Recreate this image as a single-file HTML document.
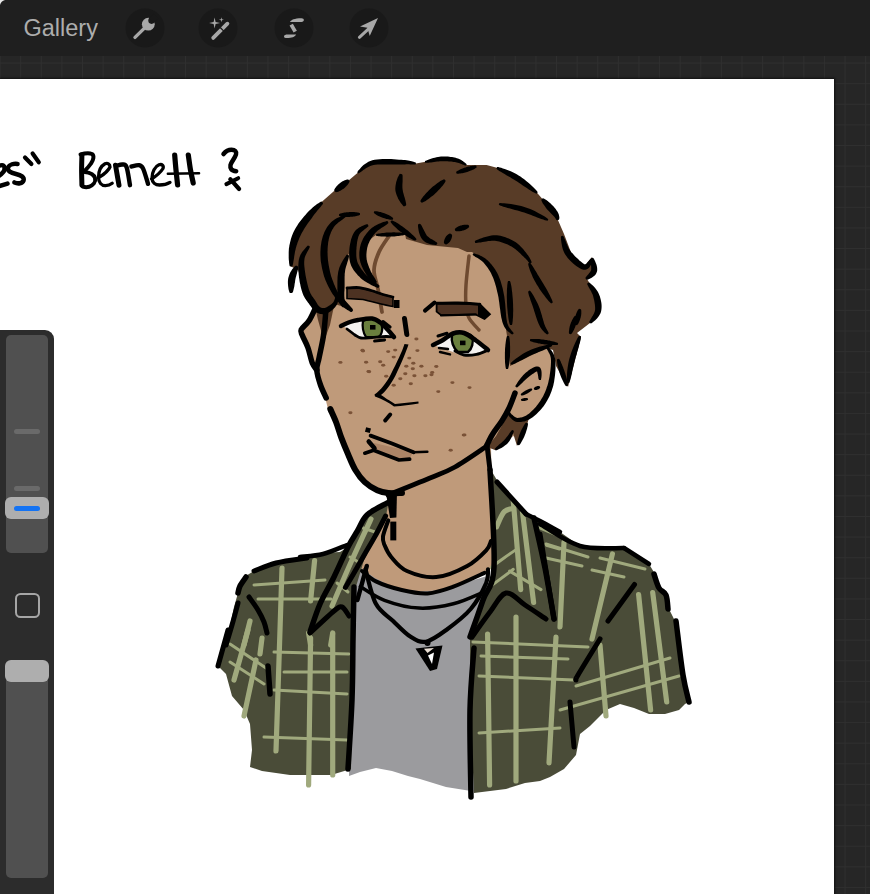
<!DOCTYPE html>
<html><head><meta charset="utf-8">
<style>
html,body{margin:0;padding:0;width:870px;height:894px;overflow:hidden;background:#262626;font-family:"Liberation Sans",sans-serif;}
#grid{position:absolute;left:0;top:0;width:870px;height:894px;
 background-color:#262626;
 background-image:linear-gradient(to right,#2f2f2f 1px,transparent 1px),linear-gradient(to bottom,#2f2f2f 1px,transparent 1px);
 background-size:20.62px 20.62px;background-position:20.2px 0.75px;}
#top{position:absolute;left:0;top:0;width:870px;height:56px;background:#1f1f1f;}
#gallery{position:absolute;left:23.5px;top:15px;font-size:23.5px;color:#adadad;letter-spacing:0px;}
#top svg{position:absolute;left:0;top:0;}
.ic{position:absolute;top:8px;width:40px;height:40px;border-radius:50%;background:#191919;}
#canvas{position:absolute;left:0;top:79px;width:834px;height:815px;background:#fff;box-shadow:0 0 2px 1px #111;}
#side{position:absolute;left:0;top:330px;width:54px;height:564px;background:#2c2c2c;border-radius:0 9px 0 0;}
.track{position:absolute;left:6px;width:42px;background:#505050;border-radius:5px;}
.tick{position:absolute;left:14px;width:26px;height:5px;border-radius:3px;background:#6a6a6a;}
.handle{position:absolute;left:5px;width:44px;height:22px;border-radius:6px;background:#aeaeae;}
svg{position:absolute;left:0;top:0;}
</style></head><body>
<div id="grid"></div>
<div id="top">
 <svg width="8" height="8" style="position:absolute;left:0;top:0"><path d="M0 0 L5 0 Q1 1 0 5 Z" fill="#e8e8e8"/></svg>
 <div id="gallery">Gallery</div>
 <svg width="870" height="56" viewBox="0 0 870 56">
  <g fill="#191919"><circle cx="145" cy="28" r="19.5"/><circle cx="218" cy="28" r="19.5"/><circle cx="294" cy="28" r="19.5"/><circle cx="369" cy="28" r="19.5"/></g>
  <g fill="#a8a8a8" stroke="#a8a8a8">
   <line x1="135" y1="37.4" x2="146" y2="26.6" stroke-width="3.4" stroke-linecap="round"/>
   <circle cx="148.3" cy="24.2" r="6.4" stroke="none"/>
   <circle cx="151.6" cy="20.6" r="3.3" fill="#191919" stroke="none"/>
   <polygon points="149.3,18.3 153.9,22.9 158.4,18.4 153.8,13.8" fill="#191919" stroke="none"/>
  </g>
  <g fill="#a8a8a8">
   <line x1="213.2" y1="37.9" x2="227.4" y2="23.7" stroke="#a8a8a8" stroke-width="3.8" stroke-linecap="round"/>
   <line x1="220.2" y1="27.5" x2="223.8" y2="31.1" stroke="#191919" stroke-width="1.3"/>
   <path d="M214.6 17.5 L215.6 21.9 L220.1 22.9 L215.6 23.9 L214.6 28.4 L213.6 23.9 L209.1 22.9 L213.6 21.9 Z"/>
   <path d="M221.4 17.2 L221.9 19.2 L223.9 19.7 L221.9 20.2 L221.4 22.2 L220.9 20.2 L218.9 19.7 L220.9 19.2 Z"/>
  </g>
  <g fill="#a8a8a8">
   <path d="M290 21.9 C291.5 19.5 294 18.4 301.5 18.2 C304.6 18.2 304.6 21.7 301.5 21.9 Z"/>
   <line x1="291.2" y1="24.6" x2="295.2" y2="31.6" stroke="#a8a8a8" stroke-width="3.8"/>
   <path d="M284 36.4 C284 35 285.5 34.6 288 34.6 L296.2 34.5 C295 36.9 291.5 38 287 38 C285 38 284 37.4 284 36.4 Z"/>
  </g>
  <g fill="#a8a8a8">
   <polygon points="378,17.9 360,26.4 367.4,27.8 369.7,36"/>
   <line x1="368" y1="29.4" x2="359.4" y2="37.3" stroke="#a8a8a8" stroke-width="3" stroke-linecap="round"/>
  </g>
 </svg>
</div>
<div id="canvas"></div>
<svg id="art" width="870" height="894" viewBox="0 0 870 894">
<polygon fill="#bf9a7a" points="318,262 303,285 310,299 316,307.4 309,320.8 301.2,329.7 302.3,335.3 307.9,347.6 312.4,363.3 316.8,370 321.3,385 325.5,399 328,409 336,422 341.4,437.9 348,454 355.2,469.7 364.8,482.1 377.2,490.3 388,493 389,496 387,503 385.6,516 375,536 364,555 358,566 362,571 375.9,581.4 401.7,590 427.6,593.4 453.4,586.6 487,571 493,568 491,446 505,440 523,432 530,416 543,401 551,382 553,359 545,345 535,345 520,300 480,236 380,226"/>
<polygon fill="#583c27" points="290,266 291.5,247.6 297.8,230.4 310.3,213.2 321.3,202.3 333.8,191.3 348.9,180.3 357.7,172.8 372.9,162.7 403.2,162.2 415.9,163.5 441.1,158.9 456.3,160.2 466.4,165 486.6,165 496.8,167.8 517,177.9 537.2,193 555,213.3 564,234 572,255 584,267 592,257 595,271 587,279 597,295 598,311 590,323 577,333 581,337 568,387 556,366 553,350 546,348 510,366 507,336 505,323 501,294 495,275 485,261 472,252 467,252 458,248 427,245 406,239 405,233.5 376,235 365,243 363,258 368,272 375,282 379,287 371,282 362,275 354,263 353,248 348,255 342,270 341,286 342,300 350,310 344,307 334.7,304 325.8,310.7 318,309.6 310.1,299.5 303.4,285 298,270"/>
<polygon fill="#5a3d28" points="316,311 334,306 330,325 324,341 318,320"/>
<polygon fill="#583c27" points="487,447 496,436 505,420 509,413 517,421 530,414 527,425 520,440 517,446 513,433 506,441 495,450"/>
<polygon fill="#9b9b9e" points="345,588 358,566 375,578 394,587.4 420,591.4 441,590 487,576 480,640 472,700 471,791 446,787 420,779 408,776 392,771 376,768 360,772 349,776 352,660"/>
<polygon fill="#4a4c38" points="389,500 387,503 367,515 357,531 348,547 340,552 322,553 306,559 276,563 254,571 244,577 238,593 234,607 226,645 218,666 226,674 232,696 244,710 250,724 252,750 250,767 262,771 290,775 331,775 351,769 353,660 355,590 364,560 376,536 386,516"/>
<polygon fill="#4a4c38" points="491,470 498,482 526,514 538,520 560,532 580,546 624,548 649,564 655,574 659,588 667,595 669,609 675,621 681,650 689,702 685,704 679,710 665,714 649,714 634,708 620,704 606,710 590,726 580,734 576,755 564,769 550,777 540,781 525,783 506,789 474,793 470,710 470,637 483,600 494,567"/>
<path fill="none" stroke="#a0a97d" stroke-width="5.2" stroke-linecap="round" stroke-linejoin="round" d="M282.0 568.0 C281.7 578.3 281.0 599.5 280.0 630.0 C279.0 660.5 276.7 730.8 276.0 751.0"/>
<path fill="none" stroke="#a0a97d" stroke-width="5.2" stroke-linecap="round" stroke-linejoin="round" d="M314.6 560.5 L310.6 601.0"/>
<path fill="none" stroke="#a0a97d" stroke-width="3" stroke-linecap="round" stroke-linejoin="round" d="M254.0 585.0 L325.0 580.0"/>
<path fill="none" stroke="#a0a97d" stroke-width="3" stroke-linecap="round" stroke-linejoin="round" d="M258.0 599.0 L331.0 599.0"/>
<path fill="none" stroke="#a0a97d" stroke-width="5.2" stroke-linecap="round" stroke-linejoin="round" d="M250.0 621.0 L244.0 645.0"/>
<path fill="none" stroke="#a0a97d" stroke-width="5.2" stroke-linecap="round" stroke-linejoin="round" d="M308.6 633.0 L310.6 645.0"/>
<path fill="none" stroke="#a0a97d" stroke-width="5.2" stroke-linecap="round" stroke-linejoin="round" d="M332.7 633.0 L330.7 645.0"/>
<path fill="none" stroke="#a0a97d" stroke-width="5.2" stroke-linecap="round" stroke-linejoin="round" d="M248.0 630.0 L234.0 680.0"/>
<path fill="none" stroke="#a0a97d" stroke-width="5.2" stroke-linecap="round" stroke-linejoin="round" d="M256.0 660.0 L244.0 716.0"/>
<path fill="none" stroke="#a0a97d" stroke-width="5.2" stroke-linecap="round" stroke-linejoin="round" d="M310.6 638.0 L308.6 785.0"/>
<path fill="none" stroke="#a0a97d" stroke-width="5.2" stroke-linecap="round" stroke-linejoin="round" d="M332.7 634.0 L332.7 775.0"/>
<path fill="none" stroke="#a0a97d" stroke-width="3" stroke-linecap="round" stroke-linejoin="round" d="M274.0 652.0 L349.0 654.0"/>
<path fill="none" stroke="#a0a97d" stroke-width="3" stroke-linecap="round" stroke-linejoin="round" d="M284.0 672.0 L347.0 672.0"/>
<path fill="none" stroke="#a0a97d" stroke-width="3" stroke-linecap="round" stroke-linejoin="round" d="M274.0 690.0 L347.0 694.0"/>
<path fill="none" stroke="#a0a97d" stroke-width="3" stroke-linecap="round" stroke-linejoin="round" d="M264.0 737.0 L347.0 740.0"/>
<path fill="none" stroke="#a0a97d" stroke-width="3" stroke-linecap="round" stroke-linejoin="round" d="M230.0 644.0 L266.0 668.0"/>
<path fill="none" stroke="#a0a97d" stroke-width="3" stroke-linecap="round" stroke-linejoin="round" d="M230.0 662.0 L264.0 684.0"/>
<path fill="none" stroke="#a0a97d" stroke-width="5.2" stroke-linecap="round" stroke-linejoin="round" d="M262.0 638.0 L260.0 654.0"/>
<path fill="none" stroke="#a0a97d" stroke-width="5.2" stroke-linecap="round" stroke-linejoin="round" d="M371.0 519.0 C367.8 525.8 358.5 545.5 352.0 560.0 C345.5 574.5 335.3 598.3 332.0 606.0"/>
<path fill="none" stroke="#a0a97d" stroke-width="3" stroke-linecap="round" stroke-linejoin="round" d="M363.0 528.0 L375.0 532.0"/>
<path fill="none" stroke="#a0a97d" stroke-width="3" stroke-linecap="round" stroke-linejoin="round" d="M350.0 557.0 L360.0 563.0"/>
<path fill="none" stroke="#a0a97d" stroke-width="3" stroke-linecap="round" stroke-linejoin="round" d="M337.0 583.0 L348.0 592.0"/>
<path fill="none" stroke="#a0a97d" stroke-width="5.2" stroke-linecap="round" stroke-linejoin="round" d="M513.3 501.0 L520.7 589.6"/>
<path fill="none" stroke="#a0a97d" stroke-width="5.2" stroke-linecap="round" stroke-linejoin="round" d="M522.5 512.0 L533.6 602.5"/>
<path fill="none" stroke="#a0a97d" stroke-width="5.2" stroke-linecap="round" stroke-linejoin="round" d="M496.6 526.8 C497.8 524.3 501.2 515.1 504.0 512.0 C506.8 508.9 511.7 508.9 513.3 508.3"/>
<path fill="none" stroke="#a0a97d" stroke-width="3" stroke-linecap="round" stroke-linejoin="round" d="M491.1 567.4 C493.2 565.8 499.7 561.1 504.0 558.0 C508.3 554.9 514.8 550.5 517.0 549.0"/>
<path fill="none" stroke="#a0a97d" stroke-width="3" stroke-linecap="round" stroke-linejoin="round" d="M491.1 585.9 L513.3 569.3"/>
<path fill="none" stroke="#a0a97d" stroke-width="3" stroke-linecap="round" stroke-linejoin="round" d="M509.6 571.1 L541.0 589.6"/>
<path fill="none" stroke="#a0a97d" stroke-width="3" stroke-linecap="round" stroke-linejoin="round" d="M537.3 526.8 L559.5 536.0"/>
<path fill="none" stroke="#a0a97d" stroke-width="3" stroke-linecap="round" stroke-linejoin="round" d="M546.5 545.2 L559.5 549.0"/>
<path fill="none" stroke="#a0a97d" stroke-width="5.2" stroke-linecap="round" stroke-linejoin="round" d="M516.0 617.0 L516.0 781.0"/>
<path fill="none" stroke="#a0a97d" stroke-width="5.2" stroke-linecap="round" stroke-linejoin="round" d="M556.0 637.0 L549.0 763.0"/>
<path fill="none" stroke="#a0a97d" stroke-width="5.2" stroke-linecap="round" stroke-linejoin="round" d="M612.4 554.0 L592.0 639.0"/>
<path fill="none" stroke="#a0a97d" stroke-width="5.2" stroke-linecap="round" stroke-linejoin="round" d="M564.0 542.0 L560.0 627.0"/>
<path fill="none" stroke="#a0a97d" stroke-width="5.2" stroke-linecap="round" stroke-linejoin="round" d="M638.6 594.5 L650.6 710.0"/>
<path fill="none" stroke="#a0a97d" stroke-width="5.2" stroke-linecap="round" stroke-linejoin="round" d="M652.7 592.5 L666.7 702.0"/>
<path fill="none" stroke="#a0a97d" stroke-width="5.2" stroke-linecap="round" stroke-linejoin="round" d="M600.0 645.0 L606.0 716.0"/>
<path fill="none" stroke="#a0a97d" stroke-width="3" stroke-linecap="round" stroke-linejoin="round" d="M546.0 544.0 L588.0 557.0"/>
<path fill="none" stroke="#a0a97d" stroke-width="3" stroke-linecap="round" stroke-linejoin="round" d="M546.0 558.0 L582.0 566.0"/>
<path fill="none" stroke="#a0a97d" stroke-width="3" stroke-linecap="round" stroke-linejoin="round" d="M600.0 558.0 L645.0 569.0"/>
<path fill="none" stroke="#a0a97d" stroke-width="3" stroke-linecap="round" stroke-linejoin="round" d="M592.0 570.0 L624.0 577.0"/>
<path fill="none" stroke="#a0a97d" stroke-width="3" stroke-linecap="round" stroke-linejoin="round" d="M473.0 642.0 L588.0 647.0"/>
<path fill="none" stroke="#a0a97d" stroke-width="3" stroke-linecap="round" stroke-linejoin="round" d="M481.0 656.0 L568.0 659.0"/>
<path fill="none" stroke="#a0a97d" stroke-width="3" stroke-linecap="round" stroke-linejoin="round" d="M479.0 676.0 L574.0 680.0"/>
<path fill="none" stroke="#a0a97d" stroke-width="3" stroke-linecap="round" stroke-linejoin="round" d="M479.0 733.0 L560.0 728.0"/>
<path fill="none" stroke="#a0a97d" stroke-width="3" stroke-linecap="round" stroke-linejoin="round" d="M576.0 686.0 L670.0 658.0"/>
<path fill="none" stroke="#a0a97d" stroke-width="3" stroke-linecap="round" stroke-linejoin="round" d="M560.0 710.0 L679.0 676.0"/>
<path fill="none" stroke="#a0a97d" stroke-width="5.2" stroke-linecap="round" stroke-linejoin="round" d="M487.6 634.0 L489.6 785.0"/>
<path fill="none" stroke="#000" stroke-width="5.5" stroke-linecap="round" stroke-linejoin="round" d="M387.0 503.0 C383.7 505.0 371.9 510.3 367.0 515.0 C362.1 519.7 360.6 525.7 357.4 531.0 C354.2 536.3 351.9 539.3 348.0 547.0 C344.1 554.7 338.7 567.5 334.0 577.0 C329.3 586.5 324.0 594.8 320.0 604.0 C316.0 613.2 311.7 627.3 310.0 632.0"/>
<path fill="none" stroke="#000" stroke-width="5" stroke-linecap="round" stroke-linejoin="round" d="M385.6 516.0 C383.8 519.4 378.6 529.9 375.0 536.4 C371.4 542.9 367.8 548.7 364.2 555.0 C360.6 561.3 356.5 568.6 353.4 574.0 C350.3 579.4 346.7 585.2 345.4 587.4"/>
<path fill="none" stroke="#000" stroke-width="4.5" stroke-linecap="round" stroke-linejoin="round" d="M366.8 566.0 L357.4 600.0"/>
<path fill="none" stroke="#000" stroke-width="5" stroke-linecap="round" stroke-linejoin="round" d="M310.0 633.0 C314.0 629.3 328.7 615.3 334.0 611.0 C339.3 606.7 339.5 606.2 342.0 607.0 C344.5 607.8 347.8 614.5 349.0 616.0"/>
<path fill="none" stroke="#000" stroke-width="5.5" stroke-linecap="round" stroke-linejoin="round" d="M354.0 587.0 C353.8 595.8 353.3 621.2 353.0 640.0 C352.7 658.8 352.8 678.5 352.0 700.0 C351.2 721.5 348.7 757.5 348.0 769.0"/>
<path fill="none" stroke="#000" stroke-width="4.5" stroke-linecap="round" stroke-linejoin="round" d="M300.0 557.0 C303.8 556.5 315.2 556.0 323.0 554.0 C330.8 552.0 343.0 546.5 347.0 545.0"/>
<path fill="none" stroke="#000" stroke-width="5" stroke-linecap="round" stroke-linejoin="round" d="M307.0 558.0 C301.8 558.8 284.8 560.8 276.0 563.0 C267.2 565.2 257.7 569.7 254.0 571.0"/>
<path fill="none" stroke="#000" stroke-width="5.5" stroke-linecap="round" stroke-linejoin="round" d="M246.0 577.0 C245.0 578.5 241.3 583.3 240.0 586.0 C238.7 588.7 238.3 591.8 238.0 593.0"/>
<path fill="none" stroke="#000" stroke-width="5" stroke-linecap="round" stroke-linejoin="round" d="M238.0 603.0 C237.0 606.7 234.0 618.0 232.0 625.0 C230.0 632.0 227.0 641.7 226.0 645.0"/>
<path fill="none" stroke="#000" stroke-width="5" stroke-linecap="round" stroke-linejoin="round" d="M228.0 630.0 L218.0 666.0"/>
<path fill="none" stroke="#000" stroke-width="5" stroke-linecap="round" stroke-linejoin="round" d="M249.0 597.0 C250.5 599.2 255.5 605.8 258.0 610.0 C260.5 614.2 262.5 618.2 264.0 622.0 C265.5 625.8 266.5 631.2 267.0 633.0"/>
<path fill="none" stroke="#000" stroke-width="5.5" stroke-linecap="round" stroke-linejoin="round" d="M268.0 666.0 L270.0 694.0"/>
<path fill="none" stroke="#000" stroke-width="5.5" stroke-linecap="round" stroke-linejoin="round" d="M490.0 470.0 C490.7 486.2 495.2 545.3 494.0 567.0 C492.8 588.7 487.0 588.3 483.0 600.0 C479.0 611.7 472.2 630.8 470.0 637.0"/>
<path fill="none" stroke="#000" stroke-width="5" stroke-linecap="round" stroke-linejoin="round" d="M497.0 482.0 L526.0 514.0"/>
<path fill="none" stroke="#000" stroke-width="4.5" stroke-linecap="round" stroke-linejoin="round" d="M526.0 514.0 C528.3 515.2 534.3 518.0 540.0 521.0 C545.7 524.0 556.7 530.2 560.0 532.0"/>
<path fill="none" stroke="#000" stroke-width="5.5" stroke-linecap="round" stroke-linejoin="round" d="M534.0 518.0 C535.8 526.3 541.7 551.2 545.0 568.0 C548.3 584.8 552.5 610.5 554.0 619.0"/>
<path fill="none" stroke="#000" stroke-width="5" stroke-linecap="round" stroke-linejoin="round" d="M472.0 637.0 C475.0 632.8 484.3 619.3 490.0 612.0 C495.7 604.7 500.2 594.2 506.0 593.0 C511.8 591.8 518.3 600.7 525.0 605.0 C531.7 609.3 542.5 616.7 546.0 619.0"/>
<path fill="none" stroke="#000" stroke-width="5.5" stroke-linecap="round" stroke-linejoin="round" d="M474.0 648.0 C473.3 658.3 470.5 685.2 470.0 710.0 C469.5 734.8 470.8 782.5 471.0 797.0"/>
<path fill="none" stroke="#000" stroke-width="4.5" stroke-linecap="round" stroke-linejoin="round" d="M540.0 524.0 C546.7 527.7 566.0 542.0 580.0 546.0 C594.0 550.0 616.7 547.7 624.0 548.0"/>
<path fill="none" stroke="#000" stroke-width="4.5" stroke-linecap="round" stroke-linejoin="round" d="M624.0 548.0 L649.0 564.0"/>
<path fill="none" stroke="#000" stroke-width="5.5" stroke-linecap="round" stroke-linejoin="round" d="M654.0 574.0 C654.8 576.3 657.0 584.5 659.0 588.0 C661.0 591.5 664.5 591.5 666.0 595.0 C667.5 598.5 667.7 606.7 668.0 609.0"/>
<path fill="none" stroke="#000" stroke-width="5.5" stroke-linecap="round" stroke-linejoin="round" d="M676.0 621.0 C677.2 630.0 680.8 661.5 683.0 675.0 C685.2 688.5 688.0 697.5 689.0 702.0"/>
<path fill="none" stroke="#000" stroke-width="5" stroke-linecap="round" stroke-linejoin="round" d="M634.5 584.5 L608.0 621.0"/>
<path fill="none" stroke="#000" stroke-width="5" stroke-linecap="round" stroke-linejoin="round" d="M540.0 534.0 L554.0 619.0"/>
<path fill="none" stroke="#000" stroke-width="5" stroke-linecap="round" stroke-linejoin="round" d="M600.0 639.0 C596.3 645.0 582.0 668.2 578.0 675.0 C574.0 681.8 576.3 679.2 576.0 680.0"/>
<path fill="none" stroke="#000" stroke-width="5" stroke-linecap="round" stroke-linejoin="round" d="M570.0 702.0 L574.0 747.0"/>
<polygon points="386,493 397,491 396.4,517.6 390,518" fill="#000"/>
<rect x="390.3" y="521.6" width="6" height="18.8" fill="#000"/>
<path fill="none" stroke="#000" stroke-width="4" stroke-linecap="round" stroke-linejoin="round" d="M388.3 520.3 C387.4 523.0 383.6 532.3 383.0 536.4 C382.4 540.5 383.1 541.5 384.5 545.0 C385.9 548.5 387.7 552.9 391.4 557.2 C395.1 561.5 399.4 567.7 406.9 571.0 C414.4 574.3 426.1 577.9 436.2 577.1 C446.2 576.3 458.9 570.5 467.2 566.0 C475.5 561.5 482.2 554.5 486.2 550.3 C490.2 546.1 490.2 542.5 491.0 541.0"/>
<path fill="none" stroke="#000" stroke-width="4" stroke-linecap="round" stroke-linejoin="round" d="M362.0 571.0 C364.3 572.7 369.3 578.2 375.9 581.4 C382.5 584.6 393.1 588.0 401.7 590.0 C410.3 592.0 419.0 594.0 427.6 593.4 C436.2 592.8 443.9 590.0 453.4 586.6 C462.9 583.2 479.3 575.1 484.5 572.8"/>
<path fill="none" stroke="#000" stroke-width="3.5" stroke-linecap="round" stroke-linejoin="round" d="M360.3 586.6 C364.3 588.9 374.7 596.7 384.5 600.3 C394.3 603.9 407.5 607.5 419.0 608.1 C430.5 608.7 442.5 606.5 453.4 603.8 C464.3 601.1 479.3 593.7 484.5 591.7"/>
<path fill="none" stroke="#000" stroke-width="4.2" stroke-linecap="round" stroke-linejoin="round" d="M365.5 569.3 C367.2 575.0 371.3 595.2 375.9 603.8 C380.5 612.4 387.4 615.5 393.1 621.0 C398.8 626.5 404.8 633.1 410.3 636.6 C415.8 640.1 419.8 642.9 425.9 641.7 C431.9 640.6 439.1 635.2 446.6 629.7 C454.1 624.2 464.1 616.8 470.7 609.0 C477.3 601.2 483.3 589.7 486.2 583.1 C489.1 576.5 487.7 571.6 488.0 569.3"/>
<polygon points="415.5,648.5 442.5,645.5 437,669 430,671" fill="#000"/>
<polygon points="424,648.8 434,648 427.5,653" fill="#e8ddd2"/>
<polygon points="428,655.5 434,652.5 432,664" fill="#fff"/>
<circle cx="427.5" cy="643" r="3" fill="#000"/>
<path fill="none" stroke="#000" stroke-width="5.5" stroke-linecap="round" stroke-linejoin="round" d="M315.7 307.4 C314.6 309.6 311.4 317.1 309.0 320.8 C306.6 324.5 302.3 327.3 301.2 329.7 C300.1 332.1 301.2 332.3 302.3 335.3 C303.4 338.3 306.2 342.9 307.9 347.6 C309.6 352.3 310.9 359.6 312.4 363.3 C313.9 367.0 316.1 368.9 316.8 370.0"/>
<path fill="none" stroke="#000" stroke-width="5.5" stroke-linecap="round" stroke-linejoin="round" d="M325.8 311.8 C325.4 315.7 324.6 327.7 323.5 335.3 C322.4 342.9 320.2 351.9 319.1 357.7 C318.0 363.5 316.6 365.4 316.8 370.0 C317.0 374.6 318.9 380.3 320.5 385.0 C322.1 389.7 325.2 395.8 326.2 398.0"/>
<path fill="none" stroke="#000" stroke-width="6" stroke-linecap="round" stroke-linejoin="round" d="M330.3 409.0 C331.2 411.2 334.1 417.2 336.0 422.0 C337.9 426.8 339.4 432.6 341.4 437.9 C343.4 443.2 345.7 448.7 348.0 454.0 C350.3 459.3 352.4 465.0 355.2 469.7 C358.0 474.4 361.1 478.7 364.8 482.1 C368.5 485.5 373.3 488.5 377.2 490.3 C381.1 492.1 384.2 492.7 388.3 493.1 C392.4 493.6 399.7 493.0 402.0 493.0"/>
<path fill="none" stroke="#000" stroke-width="4.8" stroke-linecap="round" stroke-linejoin="round" d="M388.0 495.0 C395.0 492.2 418.8 482.7 430.0 478.0 C441.2 473.3 445.5 472.3 455.0 467.0 C464.5 461.7 481.7 449.5 487.0 446.0"/>
<path fill="none" stroke="#000" stroke-width="5.5" stroke-linecap="round" stroke-linejoin="round" d="M486.0 447.0 C487.1 444.9 489.7 438.9 492.4 434.5 C495.1 430.1 499.2 425.1 502.0 420.7 C504.8 416.3 506.8 412.9 509.0 408.3 C511.2 403.7 514.0 395.6 515.0 393.0"/>
<path fill="none" stroke="#000" stroke-width="5" stroke-linecap="round" stroke-linejoin="round" d="M487.0 445.0 L490.0 470.0"/>
<path fill="#000" d="M546.1 347.5 L546.3 348.2 L546.7 348.9 L547.2 349.7 L547.7 350.5 L548.2 351.4 L548.7 352.4 L549.3 353.4 L549.8 354.5 L550.2 355.6 L550.5 356.7 L550.8 358.0 L550.9 359.3 L551.0 360.7 L551.0 362.4 L550.9 364.2 L550.8 366.2 L550.6 368.2 L550.4 370.3 L550.1 372.5 L549.8 374.6 L549.5 376.7 L549.1 378.7 L548.7 380.6 L548.3 382.4 L547.9 384.1 L547.4 385.7 L546.8 387.3 L546.3 388.9 L545.7 390.5 L545.1 392.0 L544.4 393.5 L543.7 394.9 L543.0 396.4 L542.2 397.8 L541.4 399.1 L540.6 400.5 L539.7 401.8 L538.8 403.1 L537.9 404.3 L536.9 405.6 L535.8 406.9 L534.8 408.1 L533.7 409.2 L532.6 410.3 L531.5 411.3 L530.5 412.3 L529.5 413.2 L528.5 413.9 L527.6 414.6 L526.7 415.2 L525.8 415.7 L524.8 416.2 L523.9 416.6 L523.0 416.9 L522.0 417.2 L521.2 417.4 L520.3 417.6 L519.5 417.7 L518.7 417.8 L518.0 417.9 L517.5 417.9 L517.0 417.8 L516.5 417.7 L516.0 417.5 L515.5 417.3 L515.0 417.0 L514.5 416.7 L514.0 416.3 L513.5 415.9 L513.1 415.5 L512.6 415.1 L512.2 414.8 L511.8 414.5 L511.5 414.2 L511.2 413.8 L510.9 413.4 L510.6 413.0 L510.3 412.6 L510.1 412.2 L509.8 411.8 L509.6 411.4 L509.3 411.1 L509.1 410.7 L508.9 410.5 L507.1 411.5 L507.1 411.7 L507.2 412.0 L507.3 412.4 L507.5 412.9 L507.6 413.4 L507.8 413.9 L508.0 414.4 L508.3 415.0 L508.6 415.6 L509.0 416.1 L509.4 416.7 L509.8 417.2 L510.3 417.6 L510.7 418.1 L511.2 418.6 L511.7 419.1 L512.2 419.6 L512.8 420.1 L513.5 420.6 L514.3 421.1 L515.1 421.5 L516.0 421.8 L517.0 422.0 L518.0 422.1 L518.9 422.1 L519.9 422.1 L521.0 422.0 L522.0 421.8 L523.1 421.6 L524.3 421.4 L525.5 421.0 L526.7 420.6 L527.9 420.1 L529.1 419.5 L530.3 418.8 L531.5 418.1 L532.7 417.2 L533.9 416.3 L535.1 415.3 L536.3 414.2 L537.5 413.0 L538.7 411.8 L540.0 410.5 L541.1 409.2 L542.3 407.8 L543.4 406.4 L544.4 405.0 L545.4 403.5 L546.3 402.1 L547.2 400.6 L548.0 399.1 L548.8 397.5 L549.6 395.9 L550.3 394.3 L551.0 392.6 L551.6 390.9 L552.2 389.1 L552.8 387.3 L553.3 385.5 L553.7 383.6 L554.1 381.7 L554.4 379.6 L554.7 377.5 L555.0 375.3 L555.2 373.0 L555.4 370.8 L555.5 368.6 L555.5 366.4 L555.5 364.3 L555.4 362.3 L555.3 360.5 L555.1 358.7 L554.7 357.1 L554.2 355.6 L553.7 354.2 L553.0 352.9 L552.3 351.7 L551.5 350.6 L550.8 349.7 L550.0 348.8 L549.4 348.1 L548.8 347.4 L548.3 346.9 L547.9 346.5 Z"/>
<path fill="#000" d="M516.7 387.6 L517.5 387.2 L518.3 386.5 L519.2 385.7 L520.2 384.8 L521.3 383.8 L522.4 382.7 L523.5 381.6 L524.6 380.6 L525.7 379.5 L526.8 378.5 L527.7 377.7 L528.6 376.9 L529.5 376.2 L530.5 375.5 L531.5 374.8 L532.5 374.0 L533.5 373.4 L534.4 372.7 L535.2 372.2 L536.0 371.8 L536.7 371.5 L537.1 371.3 L537.3 371.3 L537.1 371.2 L536.8 370.9 L536.8 371.0 L537.1 371.4 L537.3 372.2 L537.5 373.2 L537.8 374.3 L538.0 375.4 L538.2 376.6 L538.3 377.7 L538.5 378.7 L538.8 379.5 L539.1 380.1 L540.9 379.9 L541.1 379.3 L541.2 378.5 L541.4 377.6 L541.5 376.5 L541.6 375.2 L541.6 374.0 L541.6 372.7 L541.5 371.4 L541.3 370.2 L540.9 369.0 L540.2 367.8 L538.9 366.8 L537.5 366.5 L536.3 366.6 L535.1 366.8 L534.0 367.3 L532.9 367.8 L531.7 368.4 L530.6 369.1 L529.5 369.8 L528.4 370.6 L527.4 371.4 L526.3 372.2 L525.4 373.1 L524.4 374.0 L523.3 375.0 L522.3 376.2 L521.2 377.4 L520.2 378.7 L519.3 380.0 L518.3 381.3 L517.5 382.5 L516.8 383.7 L516.1 384.7 L515.6 385.6 L515.3 386.4 Z"/>
<path fill="#000" d="M521.3 395.5 L521.7 395.6 L522.1 395.5 L522.5 395.4 L523.0 395.3 L523.6 395.2 L524.1 395.0 L524.7 394.8 L525.2 394.5 L525.8 394.3 L526.3 394.0 L526.8 393.8 L527.3 393.5 L527.8 393.2 L528.3 393.0 L528.8 392.6 L529.3 392.3 L529.8 392.0 L530.3 391.6 L530.7 391.2 L531.2 390.9 L531.6 390.5 L531.9 390.2 L532.1 389.9 L532.3 389.5 L531.7 388.5 L531.3 388.4 L530.9 388.5 L530.5 388.6 L530.0 388.7 L529.4 388.8 L528.9 389.0 L528.3 389.2 L527.8 389.5 L527.2 389.7 L526.7 390.0 L526.2 390.2 L525.7 390.5 L525.2 390.8 L524.7 391.0 L524.2 391.4 L523.7 391.7 L523.2 392.0 L522.7 392.4 L522.3 392.8 L521.8 393.1 L521.4 393.5 L521.1 393.8 L520.9 394.1 L520.7 394.5 Z"/>
<path fill="#000" d="M534.2 389.6 L534.4 389.8 L534.6 389.8 L534.9 389.9 L535.2 389.9 L535.5 389.9 L535.8 389.9 L536.1 389.9 L536.4 389.9 L536.7 389.9 L537.0 389.8 L537.3 389.7 L537.5 389.6 L537.8 389.5 L538.1 389.4 L538.3 389.3 L538.6 389.2 L538.9 389.0 L539.1 388.8 L539.4 388.6 L539.6 388.4 L539.8 388.2 L540.0 388.0 L540.1 387.8 L540.2 387.6 L539.8 386.4 L539.6 386.2 L539.4 386.2 L539.1 386.1 L538.8 386.1 L538.5 386.1 L538.2 386.1 L537.9 386.1 L537.6 386.1 L537.3 386.1 L537.0 386.2 L536.7 386.3 L536.5 386.4 L536.2 386.5 L535.9 386.6 L535.7 386.7 L535.4 386.8 L535.1 387.0 L534.9 387.2 L534.6 387.4 L534.4 387.6 L534.2 387.8 L534.0 388.0 L533.9 388.2 L533.8 388.4 Z"/>
<path fill="#000" d="M521.1 400.5 L521.3 400.7 L521.5 400.8 L521.8 400.8 L522.1 400.9 L522.4 400.9 L522.7 401.0 L523.0 401.0 L523.4 401.0 L523.7 401.0 L524.1 401.0 L524.4 401.0 L524.7 400.9 L525.0 400.9 L525.3 400.8 L525.7 400.7 L526.0 400.6 L526.3 400.5 L526.6 400.4 L527.0 400.3 L527.2 400.2 L527.5 400.0 L527.7 399.9 L527.9 399.7 L528.1 399.5 L527.9 398.5 L527.7 398.3 L527.5 398.2 L527.2 398.2 L526.9 398.1 L526.6 398.1 L526.3 398.0 L526.0 398.0 L525.6 398.0 L525.3 398.0 L524.9 398.0 L524.6 398.0 L524.3 398.1 L524.0 398.1 L523.7 398.2 L523.3 398.3 L523.0 398.4 L522.7 398.5 L522.4 398.6 L522.0 398.7 L521.8 398.8 L521.5 399.0 L521.3 399.1 L521.1 399.3 L520.9 399.5 Z"/>
<path fill="#000" d="M526.2 422.7 L525.6 423.1 L525.1 423.6 L524.6 424.3 L524.1 425.1 L523.6 426.0 L523.0 427.0 L522.5 428.0 L521.9 429.0 L521.4 430.0 L520.9 431.1 L520.5 432.1 L520.1 433.0 L519.7 434.0 L519.3 435.0 L519.0 436.1 L518.6 437.2 L518.3 438.3 L517.9 439.4 L517.7 440.4 L517.4 441.4 L517.2 442.4 L517.1 443.2 L517.0 444.0 L517.2 444.7 L518.8 445.3 L519.4 444.9 L519.9 444.4 L520.4 443.7 L520.9 442.9 L521.4 442.0 L522.0 441.0 L522.5 440.0 L523.1 439.0 L523.6 438.0 L524.1 436.9 L524.5 435.9 L524.9 435.0 L525.3 434.0 L525.7 433.0 L526.0 431.9 L526.4 430.8 L526.7 429.7 L527.1 428.6 L527.3 427.6 L527.6 426.6 L527.8 425.6 L527.9 424.8 L528.0 424.0 L527.8 423.3 Z"/>
<path fill="#000" d="M495.7 450.4 L496.4 450.2 L497.2 449.9 L498.1 449.5 L499.1 449.0 L500.2 448.5 L501.4 447.9 L502.6 447.2 L503.7 446.4 L504.9 445.6 L506.0 444.8 L507.0 443.9 L507.9 443.0 L508.7 442.0 L509.5 440.9 L510.2 439.8 L510.9 438.6 L511.5 437.4 L512.0 436.3 L512.5 435.1 L512.9 434.1 L513.3 433.1 L513.6 432.2 L513.8 431.4 L513.8 430.7 L512.4 429.9 L511.8 430.3 L511.2 430.9 L510.6 431.7 L510.0 432.5 L509.3 433.4 L508.7 434.4 L508.0 435.4 L507.2 436.4 L506.5 437.3 L505.8 438.3 L505.2 439.1 L504.5 439.8 L503.8 440.6 L503.0 441.3 L502.1 442.1 L501.1 443.0 L500.1 443.8 L499.1 444.6 L498.2 445.5 L497.3 446.3 L496.4 447.0 L495.7 447.7 L495.1 448.4 L494.7 449.0 Z"/>
<path fill="#000" d="M507.1 336.0 L506.7 336.8 L506.5 337.8 L506.2 338.9 L506.0 340.2 L505.8 341.6 L505.6 343.2 L505.4 344.7 L505.3 346.3 L505.1 347.9 L505.0 349.5 L505.0 351.0 L504.9 352.4 L504.9 353.8 L504.9 355.4 L504.9 356.9 L504.9 358.5 L505.0 360.1 L505.0 361.7 L505.1 363.2 L505.3 364.7 L505.4 366.0 L505.6 367.2 L505.8 368.2 L506.1 369.0 L507.9 369.0 L508.3 368.2 L508.5 367.2 L508.8 366.1 L509.0 364.8 L509.2 363.4 L509.4 361.8 L509.6 360.3 L509.7 358.7 L509.9 357.1 L510.0 355.5 L510.0 354.0 L510.1 352.6 L510.1 351.2 L510.1 349.6 L510.1 348.1 L510.1 346.5 L510.0 344.9 L510.0 343.3 L509.9 341.8 L509.7 340.3 L509.6 339.0 L509.4 337.8 L509.2 336.8 L508.9 336.0 Z"/>
<path fill="#000" d="M511.5 364.8 L512.6 364.5 L513.8 364.0 L515.2 363.4 L516.8 362.6 L518.5 361.8 L520.2 360.8 L522.1 359.9 L523.9 358.9 L525.8 358.0 L527.6 357.0 L529.4 356.1 L531.1 355.3 L532.8 354.6 L534.7 353.8 L536.7 352.9 L538.8 352.1 L540.8 351.3 L542.9 350.4 L544.9 349.6 L546.8 348.8 L548.5 348.0 L550.0 347.3 L551.3 346.6 L552.3 345.9 L551.7 344.1 L550.5 344.2 L549.1 344.4 L547.4 344.8 L545.6 345.2 L543.6 345.7 L541.5 346.2 L539.3 346.8 L537.1 347.5 L534.9 348.3 L532.8 349.0 L530.8 349.8 L528.9 350.7 L527.1 351.6 L525.2 352.6 L523.4 353.6 L521.5 354.8 L519.7 356.0 L518.0 357.2 L516.4 358.3 L514.8 359.5 L513.5 360.5 L512.3 361.5 L511.3 362.4 L510.5 363.2 Z"/>
<path fill="#000" d="M529.9 340.8 L530.5 341.2 L531.3 341.5 L532.3 341.8 L533.4 342.2 L534.6 342.5 L535.9 342.8 L537.2 343.1 L538.5 343.4 L539.9 343.6 L541.2 343.9 L542.5 344.1 L543.7 344.3 L544.9 344.4 L546.2 344.6 L547.5 344.7 L548.9 344.9 L550.3 345.0 L551.6 345.0 L552.9 345.1 L554.1 345.1 L555.3 345.1 L556.3 345.1 L557.2 345.0 L557.9 344.8 L558.1 343.2 L557.5 342.8 L556.7 342.5 L555.7 342.2 L554.6 341.8 L553.4 341.5 L552.1 341.2 L550.8 340.9 L549.5 340.6 L548.1 340.4 L546.8 340.1 L545.5 339.9 L544.3 339.7 L543.1 339.6 L541.8 339.4 L540.5 339.3 L539.1 339.1 L537.7 339.0 L536.4 339.0 L535.1 338.9 L533.9 338.9 L532.7 338.9 L531.7 338.9 L530.8 339.0 L530.1 339.2 Z"/>
<path fill="#000" d="M579.0 335.7 L578.3 336.7 L577.5 338.1 L576.7 339.7 L575.8 341.5 L574.9 343.6 L573.9 345.7 L573.0 348.0 L572.1 350.3 L571.2 352.7 L570.5 355.0 L569.8 357.2 L569.2 359.3 L568.7 361.4 L568.3 363.6 L567.9 365.9 L567.6 368.1 L567.3 370.4 L567.1 372.6 L567.0 374.8 L566.9 376.8 L566.8 378.6 L566.8 380.3 L566.8 381.7 L567.0 382.8 L569.0 383.2 L569.6 382.1 L570.0 380.7 L570.5 379.2 L570.9 377.4 L571.4 375.4 L571.9 373.4 L572.3 371.2 L572.8 369.0 L573.3 366.9 L573.8 364.7 L574.3 362.7 L574.8 360.7 L575.3 358.7 L575.9 356.6 L576.6 354.4 L577.2 352.0 L577.9 349.7 L578.6 347.4 L579.2 345.1 L579.8 343.0 L580.3 341.0 L580.7 339.2 L580.9 337.6 L581.0 336.3 Z"/>
<path fill="#000" d="M557.1 359.3 L557.0 360.0 L557.0 360.8 L557.1 361.8 L557.2 362.9 L557.4 364.0 L557.6 365.2 L557.9 366.5 L558.2 367.8 L558.5 369.1 L558.8 370.4 L559.2 371.6 L559.5 372.8 L560.0 374.0 L560.4 375.3 L560.9 376.6 L561.5 377.9 L562.1 379.3 L562.7 380.6 L563.3 381.8 L563.9 383.0 L564.5 384.0 L565.0 385.0 L565.6 385.8 L566.1 386.3 L567.9 385.7 L568.0 384.9 L567.9 384.0 L567.7 382.9 L567.5 381.7 L567.2 380.4 L566.8 379.1 L566.5 377.7 L566.1 376.3 L565.7 374.9 L565.3 373.6 L564.8 372.3 L564.5 371.2 L564.1 370.0 L563.6 368.9 L563.2 367.6 L562.7 366.4 L562.2 365.2 L561.7 364.0 L561.2 362.9 L560.8 361.8 L560.3 360.8 L559.8 360.0 L559.4 359.3 L558.9 358.7 Z"/>
<path fill="none" stroke="#6e4a30" stroke-width="3.5" stroke-linecap="round" stroke-linejoin="round" d="M469.0 256.0 C468.5 260.8 466.5 276.8 466.0 285.0 C465.5 293.2 465.5 299.5 466.0 305.0 C466.5 310.5 466.8 313.8 469.0 318.0 C471.2 322.2 477.3 328.0 479.0 330.0"/>
<path fill="none" stroke="#6e4a30" stroke-width="3.8" stroke-linecap="round" stroke-linejoin="round" d="M389.0 236.0 C387.3 238.7 381.5 246.3 379.0 252.0 C376.5 257.7 374.2 263.8 374.0 270.0 C373.8 276.2 376.7 282.0 378.0 289.0 C379.3 296.0 381.3 308.2 382.0 312.0"/>
<path fill="#000" d="M358.2 173.4 L359.1 173.1 L360.0 172.5 L361.1 171.8 L362.2 171.0 L363.3 170.1 L364.6 169.2 L365.9 168.3 L367.3 167.5 L368.8 166.7 L370.3 166.0 L371.8 165.5 L373.5 165.1 L375.3 164.8 L377.5 164.6 L380.0 164.5 L382.6 164.4 L385.4 164.4 L388.2 164.4 L391.0 164.4 L393.8 164.5 L396.4 164.5 L398.9 164.5 L401.2 164.5 L403.1 164.4 L404.8 164.4 L406.4 164.3 L407.8 164.3 L409.0 164.3 L410.2 164.4 L411.2 164.4 L412.2 164.4 L413.0 164.5 L413.8 164.5 L414.5 164.5 L415.2 164.5 L415.8 164.3 L416.0 162.7 L415.5 162.4 L414.9 162.2 L414.2 162.0 L413.5 161.7 L412.6 161.5 L411.7 161.2 L410.6 161.0 L409.4 160.8 L408.1 160.5 L406.6 160.3 L405.0 160.1 L403.3 160.0 L401.3 159.8 L399.1 159.7 L396.6 159.5 L393.9 159.3 L391.1 159.1 L388.2 159.1 L385.3 159.0 L382.5 159.1 L379.7 159.2 L377.0 159.4 L374.6 159.8 L372.3 160.3 L370.3 161.0 L368.4 161.8 L366.6 162.9 L365.0 164.0 L363.5 165.1 L362.2 166.3 L361.0 167.5 L360.0 168.7 L359.1 169.7 L358.3 170.6 L357.7 171.4 L357.2 172.2 Z"/>
<path fill="#000" d="M425.1 162.7 L426.0 162.8 L427.0 162.8 L428.2 162.7 L429.6 162.5 L431.0 162.4 L432.5 162.2 L434.0 162.0 L435.6 161.8 L437.1 161.6 L438.6 161.4 L440.0 161.3 L441.2 161.2 L442.5 161.2 L443.8 161.2 L445.0 161.2 L446.3 161.3 L447.6 161.3 L448.9 161.4 L450.1 161.5 L451.3 161.6 L452.5 161.8 L453.7 161.9 L454.8 162.1 L455.8 162.2 L456.7 162.4 L457.7 162.7 L458.7 163.0 L459.6 163.3 L460.6 163.7 L461.5 164.1 L462.4 164.5 L463.3 164.8 L464.1 165.1 L464.8 165.4 L465.5 165.6 L466.1 165.6 L466.7 164.4 L466.4 163.9 L465.9 163.5 L465.3 163.0 L464.7 162.4 L463.9 161.9 L463.1 161.3 L462.2 160.7 L461.2 160.1 L460.2 159.5 L459.1 159.0 L458.0 158.5 L456.8 158.2 L455.7 157.8 L454.5 157.5 L453.2 157.3 L452.0 157.0 L450.6 156.9 L449.3 156.7 L447.9 156.6 L446.5 156.5 L445.1 156.4 L443.7 156.4 L442.3 156.5 L441.0 156.6 L439.5 156.7 L438.0 157.0 L436.4 157.3 L434.8 157.7 L433.2 158.1 L431.7 158.6 L430.2 159.0 L428.9 159.5 L427.6 160.0 L426.5 160.4 L425.6 160.8 L424.9 161.3 Z"/>
<path fill="#000" d="M456.5 173.5 L457.1 173.7 L457.8 173.7 L458.6 173.7 L459.4 173.6 L460.3 173.5 L461.3 173.3 L462.3 173.2 L463.3 172.9 L464.3 172.7 L465.3 172.5 L466.2 172.2 L467.1 171.9 L468.0 171.7 L468.9 171.3 L469.8 171.0 L470.8 170.6 L471.8 170.2 L472.7 169.8 L473.6 169.4 L474.4 168.9 L475.1 168.5 L475.8 168.1 L476.3 167.7 L476.7 167.2 L476.3 165.8 L475.7 165.6 L475.0 165.6 L474.2 165.6 L473.4 165.7 L472.5 165.8 L471.5 166.0 L470.5 166.1 L469.5 166.4 L468.5 166.6 L467.5 166.8 L466.6 167.1 L465.7 167.4 L464.8 167.6 L463.9 168.0 L463.0 168.3 L462.0 168.7 L461.0 169.1 L460.1 169.5 L459.2 169.9 L458.4 170.4 L457.7 170.8 L457.0 171.2 L456.5 171.6 L456.1 172.1 Z"/>
<path fill="#000" d="M496.4 168.6 L497.2 169.5 L498.3 170.3 L499.7 171.2 L501.2 172.1 L502.8 173.1 L504.6 174.1 L506.4 175.2 L508.3 176.2 L510.2 177.3 L512.0 178.4 L513.8 179.4 L515.4 180.4 L517.1 181.5 L518.9 182.7 L520.8 184.0 L522.8 185.4 L524.8 186.8 L526.8 188.1 L528.8 189.4 L530.6 190.6 L532.4 191.7 L534.0 192.6 L535.4 193.3 L536.7 193.7 L537.7 192.3 L537.1 191.2 L536.0 190.0 L534.8 188.7 L533.3 187.2 L531.7 185.7 L529.9 184.1 L528.1 182.4 L526.2 180.9 L524.2 179.3 L522.3 177.9 L520.4 176.5 L518.6 175.4 L516.7 174.3 L514.8 173.2 L512.8 172.3 L510.7 171.3 L508.7 170.5 L506.7 169.7 L504.7 169.0 L502.9 168.4 L501.2 167.8 L499.7 167.4 L498.3 167.1 L497.2 167.0 Z"/>
<path fill="#000" d="M321.5 201.5 L320.7 201.7 L320.0 202.2 L319.1 202.7 L318.1 203.4 L317.0 204.1 L315.9 204.9 L314.8 205.8 L313.6 206.8 L312.4 207.8 L311.2 208.9 L310.0 210.0 L308.9 211.1 L307.7 212.3 L306.6 213.6 L305.4 214.9 L304.2 216.3 L303.0 217.7 L301.8 219.2 L300.6 220.7 L299.4 222.2 L298.3 223.8 L297.3 225.4 L296.3 227.0 L295.4 228.5 L294.6 230.0 L293.8 231.6 L293.1 233.1 L292.5 234.6 L291.9 236.1 L291.4 237.6 L290.9 239.1 L290.5 240.7 L290.1 242.2 L289.8 243.8 L289.4 245.3 L289.2 246.9 L288.9 248.6 L288.8 250.4 L288.7 252.3 L288.7 254.2 L288.7 256.1 L288.7 257.9 L288.8 259.7 L289.0 261.4 L289.1 262.9 L289.3 264.3 L289.5 265.4 L289.8 266.3 L292.2 266.5 L292.6 265.6 L292.9 264.4 L293.2 263.1 L293.4 261.6 L293.7 259.9 L294.0 258.2 L294.2 256.4 L294.5 254.7 L294.8 252.9 L295.1 251.3 L295.5 249.7 L295.8 248.3 L296.2 246.9 L296.6 245.5 L297.1 244.2 L297.5 242.8 L298.0 241.5 L298.5 240.2 L299.0 238.9 L299.6 237.6 L300.2 236.3 L300.8 234.9 L301.5 233.6 L302.2 232.3 L303.0 230.9 L303.8 229.5 L304.7 228.1 L305.7 226.6 L306.7 225.1 L307.7 223.6 L308.8 222.1 L309.8 220.7 L310.9 219.2 L311.9 217.9 L312.8 216.5 L313.7 215.3 L314.6 214.1 L315.5 212.9 L316.5 211.8 L317.4 210.6 L318.3 209.5 L319.2 208.4 L320.1 207.4 L320.9 206.4 L321.6 205.5 L322.3 204.7 L322.8 203.9 L323.1 203.1 Z"/>
<path fill="#000" d="M296.0 265.6 L295.3 265.9 L294.7 266.4 L294.0 267.1 L293.4 267.9 L292.6 268.8 L291.9 269.8 L291.2 270.9 L290.5 272.1 L289.9 273.3 L289.4 274.6 L288.9 275.9 L288.5 277.2 L288.2 278.6 L288.0 280.1 L287.9 281.6 L287.9 283.1 L288.0 284.6 L288.1 286.1 L288.3 287.6 L288.5 288.9 L288.8 290.2 L289.1 291.3 L289.4 292.2 L289.9 292.9 L292.1 293.1 L292.7 292.3 L293.1 291.4 L293.4 290.3 L293.7 289.1 L294.0 287.7 L294.3 286.4 L294.5 285.0 L294.7 283.6 L295.0 282.2 L295.1 280.9 L295.3 279.8 L295.5 278.8 L295.7 277.8 L296.0 276.8 L296.3 275.7 L296.6 274.6 L296.9 273.4 L297.2 272.3 L297.5 271.2 L297.8 270.1 L298.0 269.1 L298.1 268.1 L298.2 267.2 L298.0 266.4 Z"/>
<path fill="#000" d="M348.3 179.5 L347.6 179.4 L347.0 179.5 L346.4 179.7 L345.6 179.9 L344.9 180.2 L344.1 180.5 L343.3 180.9 L342.6 181.3 L341.8 181.8 L341.1 182.3 L340.4 182.7 L339.8 183.2 L339.2 183.7 L338.6 184.2 L338.0 184.8 L337.4 185.4 L336.8 186.1 L336.2 186.7 L335.7 187.4 L335.2 188.0 L334.8 188.7 L334.5 189.3 L334.2 189.9 L334.2 190.5 L335.4 192.1 L336.1 192.2 L336.7 192.1 L337.3 191.9 L338.1 191.7 L338.8 191.4 L339.6 191.1 L340.4 190.7 L341.1 190.3 L341.9 189.8 L342.6 189.3 L343.3 188.9 L343.9 188.4 L344.5 187.9 L345.1 187.4 L345.7 186.8 L346.3 186.2 L346.9 185.5 L347.5 184.9 L348.0 184.2 L348.5 183.6 L348.9 182.9 L349.2 182.3 L349.5 181.7 L349.5 181.1 Z"/>
<path fill="#000" d="M308.1 245.4 L307.5 245.8 L306.9 246.4 L306.3 247.1 L305.5 247.9 L304.7 248.9 L303.8 249.9 L303.0 251.0 L302.1 252.1 L301.3 253.4 L300.6 254.6 L300.0 256.0 L299.5 257.3 L299.1 258.7 L298.8 260.1 L298.6 261.4 L298.5 262.8 L298.4 264.3 L298.3 265.7 L298.3 267.1 L298.3 268.6 L298.4 270.0 L298.5 271.5 L298.6 272.9 L298.7 274.4 L298.9 275.9 L299.0 277.5 L299.3 279.1 L299.5 280.8 L299.8 282.5 L300.2 284.1 L300.5 285.8 L300.9 287.4 L301.3 289.0 L301.7 290.5 L302.2 291.9 L302.6 293.2 L303.1 294.5 L303.6 295.7 L304.2 296.8 L304.7 297.8 L305.3 298.8 L305.9 299.6 L306.5 300.5 L307.1 301.2 L307.6 302.0 L308.1 302.7 L308.6 303.3 L309.1 304.0 L309.6 304.7 L310.1 305.4 L310.6 306.1 L311.1 306.8 L311.6 307.6 L312.1 308.3 L312.7 309.1 L313.3 309.8 L314.0 310.5 L314.7 311.2 L315.4 311.8 L316.2 312.3 L317.0 312.8 L317.8 313.1 L318.6 313.5 L319.5 313.7 L320.3 314.0 L321.2 314.1 L322.1 314.2 L323.0 314.2 L324.0 314.1 L324.9 314.0 L325.8 313.8 L326.7 313.5 L327.7 313.1 L328.6 312.6 L329.5 312.0 L330.4 311.4 L331.3 310.7 L332.2 310.0 L333.0 309.3 L333.8 308.5 L334.6 307.7 L335.3 306.9 L335.9 306.1 L336.5 305.3 L337.0 304.4 L337.4 303.5 L337.7 302.6 L337.9 301.7 L338.1 300.8 L338.1 299.9 L338.2 299.1 L338.2 298.4 L338.2 297.7 L338.2 297.1 L338.2 296.6 L338.1 296.2 L335.9 295.8 L335.7 296.1 L335.5 296.7 L335.3 297.3 L335.1 297.9 L334.9 298.6 L334.7 299.2 L334.4 299.9 L334.2 300.6 L333.9 301.2 L333.6 301.8 L333.3 302.3 L332.9 302.7 L332.5 303.1 L331.9 303.7 L331.2 304.2 L330.5 304.8 L329.8 305.3 L329.0 305.8 L328.2 306.3 L327.4 306.8 L326.7 307.2 L326.0 307.5 L325.4 307.8 L324.9 307.9 L324.4 308.0 L323.9 308.1 L323.5 308.1 L323.1 308.1 L322.6 308.1 L322.2 308.0 L321.8 307.9 L321.4 307.7 L321.0 307.6 L320.5 307.4 L320.1 307.1 L319.8 306.9 L319.5 306.6 L319.1 306.3 L318.8 305.9 L318.4 305.5 L318.0 305.0 L317.6 304.4 L317.2 303.8 L316.8 303.1 L316.3 302.3 L315.9 301.6 L315.4 300.8 L314.9 300.0 L314.4 299.2 L313.8 298.5 L313.3 297.8 L312.8 297.0 L312.3 296.4 L311.8 295.7 L311.4 295.0 L311.0 294.2 L310.5 293.5 L310.1 292.6 L309.8 291.8 L309.4 290.8 L309.0 289.7 L308.6 288.4 L308.2 287.1 L307.8 285.6 L307.4 284.1 L307.1 282.6 L306.7 281.1 L306.4 279.5 L306.1 278.0 L305.8 276.4 L305.5 275.0 L305.3 273.6 L305.1 272.2 L304.9 270.8 L304.7 269.5 L304.6 268.2 L304.4 266.8 L304.3 265.6 L304.2 264.3 L304.2 263.1 L304.2 261.9 L304.3 260.8 L304.4 259.7 L304.5 258.7 L304.7 257.7 L305.1 256.6 L305.5 255.5 L306.0 254.4 L306.6 253.3 L307.2 252.1 L307.8 251.0 L308.4 250.0 L308.9 249.0 L309.4 248.1 L309.7 247.3 L309.9 246.6 Z"/>
<path fill="#000" d="M344.4 215.1 L343.7 215.2 L342.9 215.5 L341.9 215.9 L340.8 216.3 L339.7 216.9 L338.4 217.5 L337.1 218.1 L335.8 218.8 L334.6 219.6 L333.3 220.4 L332.2 221.3 L331.1 222.2 L330.2 223.2 L329.3 224.2 L328.5 225.2 L327.7 226.2 L327.0 227.3 L326.3 228.5 L325.6 229.7 L325.0 230.9 L324.4 232.1 L323.9 233.4 L323.4 234.7 L322.9 236.1 L322.5 237.5 L322.1 239.0 L321.7 240.5 L321.4 242.1 L321.2 243.6 L320.9 245.3 L320.7 246.9 L320.6 248.5 L320.5 250.2 L320.4 251.8 L320.4 253.5 L320.4 255.1 L320.5 256.8 L320.6 258.4 L320.7 260.2 L320.9 261.9 L321.2 263.6 L321.5 265.3 L321.8 267.0 L322.1 268.6 L322.5 270.3 L322.9 271.8 L323.3 273.4 L323.7 274.9 L324.1 276.4 L324.6 277.8 L325.1 279.3 L325.7 280.7 L326.3 282.0 L326.8 283.3 L327.4 284.6 L328.0 285.8 L328.6 287.0 L329.2 288.1 L329.8 289.2 L330.4 290.3 L330.9 291.3 L331.5 292.3 L332.1 293.3 L332.7 294.2 L333.3 295.0 L333.9 295.8 L334.4 296.6 L335.0 297.4 L335.5 298.1 L336.1 298.8 L336.6 299.5 L337.1 300.2 L337.6 300.9 L338.1 301.7 L338.7 302.4 L339.3 303.2 L339.8 303.9 L340.4 304.6 L340.9 305.2 L341.4 305.9 L341.9 306.4 L342.3 306.9 L342.7 307.3 L343.1 307.6 L344.9 306.4 L344.8 305.9 L344.6 305.4 L344.4 304.8 L344.1 304.1 L343.8 303.4 L343.4 302.7 L343.0 301.9 L342.6 301.1 L342.2 300.2 L341.7 299.4 L341.3 298.6 L340.9 297.8 L340.5 297.0 L340.1 296.2 L339.6 295.4 L339.2 294.6 L338.7 293.8 L338.3 293.0 L337.8 292.2 L337.4 291.4 L336.9 290.5 L336.5 289.6 L336.1 288.7 L335.6 287.7 L335.2 286.7 L334.7 285.5 L334.2 284.4 L333.7 283.2 L333.3 282.0 L332.8 280.8 L332.3 279.6 L331.9 278.3 L331.4 277.0 L331.0 275.7 L330.7 274.4 L330.3 273.1 L330.0 271.7 L329.7 270.3 L329.4 268.8 L329.1 267.2 L328.8 265.7 L328.5 264.1 L328.3 262.5 L328.1 261.0 L327.9 259.4 L327.8 257.9 L327.7 256.4 L327.6 254.9 L327.6 253.4 L327.5 251.9 L327.6 250.5 L327.6 249.0 L327.7 247.5 L327.8 246.0 L328.0 244.5 L328.1 243.1 L328.3 241.7 L328.6 240.4 L328.8 239.1 L329.1 237.9 L329.4 236.7 L329.8 235.6 L330.2 234.4 L330.6 233.4 L331.0 232.3 L331.5 231.3 L332.0 230.3 L332.5 229.3 L333.1 228.4 L333.6 227.5 L334.3 226.6 L334.9 225.8 L335.6 225.0 L336.4 224.2 L337.3 223.4 L338.3 222.5 L339.4 221.7 L340.5 220.9 L341.5 220.2 L342.6 219.4 L343.5 218.7 L344.4 218.1 L345.1 217.5 L345.6 216.9 Z"/>
<path fill="#000" d="M339.0 215.7 L339.6 216.1 L340.2 216.2 L341.0 216.4 L341.8 216.6 L342.7 216.7 L343.7 216.8 L344.7 216.9 L345.7 216.9 L346.7 216.9 L347.7 216.9 L348.7 216.9 L349.6 216.9 L350.5 216.8 L351.5 216.8 L352.5 216.7 L353.5 216.5 L354.5 216.4 L355.5 216.2 L356.5 216.0 L357.4 215.8 L358.2 215.6 L358.9 215.4 L359.5 215.1 L360.0 214.7 L360.0 213.3 L359.4 212.9 L358.8 212.8 L358.0 212.6 L357.2 212.4 L356.3 212.3 L355.3 212.2 L354.3 212.1 L353.3 212.1 L352.3 212.1 L351.3 212.1 L350.3 212.1 L349.4 212.1 L348.5 212.2 L347.5 212.2 L346.5 212.3 L345.5 212.5 L344.5 212.6 L343.5 212.8 L342.5 213.0 L341.6 213.2 L340.8 213.4 L340.1 213.6 L339.5 213.9 L339.0 214.3 Z"/>
<path fill="#000" d="M347.0 254.6 L346.4 255.1 L345.8 255.9 L345.1 256.9 L344.4 258.0 L343.6 259.2 L342.8 260.5 L342.0 261.9 L341.3 263.3 L340.6 264.8 L339.9 266.3 L339.3 267.8 L338.9 269.3 L338.5 270.7 L338.2 272.1 L338.0 273.6 L337.8 275.0 L337.6 276.4 L337.5 277.9 L337.5 279.3 L337.4 280.7 L337.4 282.0 L337.4 283.4 L337.4 284.7 L337.4 286.0 L337.4 287.3 L337.4 288.6 L337.4 289.9 L337.5 291.3 L337.5 292.6 L337.6 294.0 L337.7 295.4 L337.8 296.8 L338.1 298.1 L338.4 299.5 L338.8 300.8 L339.3 302.1 L339.9 303.3 L340.7 304.5 L341.6 305.5 L342.6 306.4 L343.5 307.3 L344.5 308.1 L345.5 308.7 L346.4 309.3 L347.2 309.9 L348.0 310.3 L348.6 310.6 L349.2 310.8 L350.8 309.2 L350.6 308.6 L350.1 307.9 L349.6 307.2 L348.9 306.4 L348.3 305.6 L347.6 304.8 L347.0 304.0 L346.3 303.1 L345.8 302.3 L345.3 301.4 L345.0 300.7 L344.7 299.9 L344.6 299.2 L344.4 298.3 L344.4 297.3 L344.3 296.2 L344.3 295.0 L344.3 293.9 L344.3 292.6 L344.4 291.3 L344.5 290.0 L344.5 288.7 L344.6 287.3 L344.6 286.0 L344.6 284.7 L344.6 283.4 L344.6 282.1 L344.6 280.7 L344.6 279.4 L344.6 278.1 L344.6 276.9 L344.7 275.6 L344.7 274.3 L344.8 273.1 L345.0 271.9 L345.1 270.7 L345.3 269.5 L345.6 268.2 L346.0 266.8 L346.4 265.4 L346.9 263.9 L347.3 262.5 L347.8 261.1 L348.2 259.7 L348.5 258.5 L348.8 257.3 L349.0 256.3 L349.0 255.4 Z"/>
<path fill="#000" d="M367.4 224.1 L366.7 224.2 L366.0 224.5 L365.0 224.8 L364.0 225.2 L362.8 225.7 L361.6 226.2 L360.4 226.9 L359.1 227.6 L357.9 228.4 L356.8 229.3 L355.7 230.3 L354.7 231.5 L353.9 232.7 L353.2 233.9 L352.6 235.2 L352.1 236.5 L351.6 237.9 L351.1 239.3 L350.8 240.7 L350.5 242.2 L350.2 243.6 L349.9 245.0 L349.7 246.3 L349.5 247.7 L349.4 249.0 L349.3 250.3 L349.2 251.7 L349.1 253.1 L349.1 254.5 L349.2 255.9 L349.2 257.3 L349.4 258.7 L349.6 260.1 L349.9 261.4 L350.2 262.8 L350.6 264.1 L351.1 265.5 L351.7 266.8 L352.4 268.0 L353.1 269.2 L353.9 270.4 L354.7 271.5 L355.5 272.6 L356.4 273.6 L357.2 274.5 L358.0 275.4 L358.9 276.3 L359.7 277.1 L360.5 278.0 L361.4 278.7 L362.2 279.4 L363.1 280.1 L364.0 280.7 L364.8 281.2 L365.7 281.8 L366.5 282.3 L367.3 282.7 L368.1 283.2 L368.9 283.6 L369.6 284.0 L370.4 284.5 L371.2 284.9 L372.1 285.4 L372.9 285.8 L373.8 286.2 L374.6 286.6 L375.4 286.9 L376.1 287.2 L376.8 287.5 L377.4 287.7 L377.9 287.9 L378.4 287.9 L379.6 286.1 L379.3 285.6 L378.9 285.2 L378.4 284.8 L377.8 284.3 L377.2 283.8 L376.6 283.3 L375.9 282.8 L375.2 282.2 L374.4 281.6 L373.7 281.1 L373.1 280.5 L372.4 280.0 L371.7 279.4 L371.0 278.9 L370.3 278.3 L369.6 277.7 L368.9 277.2 L368.2 276.6 L367.5 276.1 L366.8 275.5 L366.2 274.9 L365.5 274.2 L364.9 273.6 L364.3 272.9 L363.7 272.1 L363.0 271.2 L362.3 270.3 L361.6 269.4 L360.9 268.5 L360.3 267.5 L359.7 266.5 L359.1 265.6 L358.6 264.6 L358.1 263.7 L357.7 262.8 L357.4 261.9 L357.1 260.9 L356.9 259.9 L356.7 258.9 L356.5 257.8 L356.4 256.7 L356.3 255.5 L356.3 254.3 L356.3 253.1 L356.3 251.9 L356.3 250.7 L356.4 249.5 L356.5 248.3 L356.5 247.1 L356.7 245.9 L356.8 244.6 L357.0 243.3 L357.1 242.0 L357.4 240.8 L357.6 239.6 L357.9 238.4 L358.2 237.3 L358.5 236.3 L358.9 235.4 L359.3 234.5 L359.8 233.8 L360.4 233.0 L361.1 232.2 L362.0 231.4 L362.9 230.7 L363.9 229.9 L364.9 229.1 L365.8 228.4 L366.7 227.8 L367.5 227.1 L368.2 226.5 L368.6 225.9 Z"/>
<path fill="#000" d="M387.5 221.0 L386.7 221.1 L385.7 221.4 L384.6 221.7 L383.3 222.1 L382.0 222.6 L380.5 223.2 L379.0 223.8 L377.5 224.4 L376.1 225.2 L374.6 226.0 L373.3 226.9 L372.0 227.8 L370.9 228.7 L369.8 229.7 L368.8 230.8 L367.8 231.9 L366.9 233.0 L366.0 234.2 L365.1 235.4 L364.3 236.6 L363.6 237.8 L362.9 239.1 L362.3 240.4 L361.7 241.7 L361.2 243.0 L360.7 244.4 L360.4 245.8 L360.0 247.2 L359.8 248.6 L359.6 250.0 L359.4 251.4 L359.3 252.8 L359.3 254.2 L359.3 255.6 L359.4 257.0 L359.5 258.4 L359.8 259.8 L360.1 261.1 L360.4 262.5 L360.9 263.8 L361.3 265.1 L361.9 266.4 L362.4 267.6 L363.0 268.9 L363.6 270.0 L364.3 271.2 L364.9 272.2 L365.5 273.3 L366.2 274.4 L367.0 275.6 L367.9 276.7 L368.8 277.7 L369.7 278.7 L370.6 279.7 L371.5 280.6 L372.4 281.4 L373.2 282.2 L373.9 282.8 L374.5 283.3 L375.1 283.7 L376.9 282.3 L376.7 281.6 L376.3 280.9 L375.8 280.0 L375.3 279.1 L374.7 278.1 L374.0 277.0 L373.4 276.0 L372.7 274.9 L372.1 273.8 L371.5 272.7 L370.9 271.7 L370.5 270.7 L370.0 269.6 L369.6 268.5 L369.1 267.4 L368.7 266.3 L368.3 265.2 L367.9 264.1 L367.5 263.0 L367.2 261.9 L367.0 260.8 L366.7 259.7 L366.6 258.7 L366.5 257.6 L366.4 256.6 L366.4 255.5 L366.4 254.3 L366.5 253.2 L366.6 252.0 L366.7 250.9 L366.9 249.8 L367.1 248.6 L367.3 247.5 L367.6 246.4 L367.9 245.3 L368.3 244.3 L368.7 243.3 L369.2 242.2 L369.7 241.1 L370.3 240.1 L370.9 239.0 L371.5 238.0 L372.2 236.9 L372.9 235.9 L373.6 234.9 L374.4 234.0 L375.2 233.1 L376.0 232.2 L376.8 231.4 L377.8 230.6 L378.9 229.7 L380.1 228.9 L381.3 228.0 L382.6 227.2 L383.9 226.4 L385.0 225.7 L386.1 224.9 L387.1 224.3 L387.9 223.6 L388.5 223.0 Z"/>
<path fill="#000" d="M373.8 212.7 L374.1 213.2 L374.6 213.6 L375.2 214.0 L375.9 214.5 L376.6 214.9 L377.5 215.4 L378.3 215.9 L379.2 216.3 L380.1 216.7 L381.0 217.1 L381.9 217.4 L382.7 217.8 L383.5 218.0 L384.4 218.3 L385.3 218.6 L386.2 218.9 L387.2 219.1 L388.2 219.3 L389.1 219.5 L390.0 219.7 L390.8 219.8 L391.5 219.8 L392.2 219.8 L392.8 219.7 L393.2 218.3 L392.9 217.8 L392.4 217.4 L391.8 217.0 L391.1 216.5 L390.4 216.1 L389.5 215.6 L388.7 215.1 L387.8 214.7 L386.9 214.3 L386.0 213.9 L385.1 213.6 L384.3 213.2 L383.5 213.0 L382.6 212.7 L381.7 212.4 L380.8 212.1 L379.8 211.9 L378.8 211.7 L377.9 211.5 L377.0 211.3 L376.2 211.2 L375.5 211.2 L374.8 211.2 L374.2 211.3 Z"/>
<path fill="#000" d="M390.5 221.6 L390.9 222.5 L391.5 223.3 L392.3 224.2 L393.2 225.2 L394.3 226.2 L395.4 227.2 L396.5 228.3 L397.7 229.4 L398.9 230.4 L400.1 231.4 L401.3 232.3 L402.4 233.1 L403.5 233.9 L404.6 234.8 L405.8 235.6 L407.0 236.4 L408.3 237.2 L409.5 237.9 L410.7 238.6 L411.8 239.2 L412.9 239.7 L413.8 240.2 L414.7 240.5 L415.5 240.6 L416.5 239.4 L416.1 238.6 L415.6 237.9 L414.9 237.1 L414.0 236.2 L413.1 235.3 L412.1 234.4 L411.1 233.4 L410.0 232.4 L408.9 231.5 L407.8 230.6 L406.7 229.7 L405.6 228.9 L404.5 228.0 L403.4 227.2 L402.1 226.3 L400.8 225.4 L399.5 224.5 L398.1 223.6 L396.8 222.8 L395.6 222.1 L394.4 221.5 L393.3 220.9 L392.4 220.5 L391.5 220.4 Z"/>
<path fill="#000" d="M376.0 235.6 L376.7 235.9 L377.6 236.1 L378.7 236.2 L379.8 236.3 L381.1 236.4 L382.4 236.5 L383.8 236.6 L385.2 236.6 L386.6 236.7 L388.0 236.7 L389.3 236.6 L390.6 236.6 L391.8 236.5 L393.2 236.5 L394.5 236.4 L395.9 236.3 L397.3 236.1 L398.7 236.0 L400.0 235.8 L401.3 235.6 L402.4 235.4 L403.5 235.2 L404.3 235.0 L405.0 234.6 L405.0 233.4 L404.3 233.1 L403.4 232.9 L402.3 232.8 L401.2 232.7 L399.9 232.6 L398.6 232.5 L397.2 232.4 L395.8 232.4 L394.4 232.3 L393.0 232.3 L391.7 232.4 L390.4 232.4 L389.2 232.5 L387.8 232.5 L386.5 232.6 L385.1 232.7 L383.7 232.9 L382.3 233.0 L381.0 233.2 L379.7 233.4 L378.6 233.6 L377.5 233.8 L376.7 234.0 L376.0 234.4 Z"/>
<path fill="#000" d="M399.9 173.8 L399.3 174.5 L398.8 175.4 L398.3 176.4 L397.7 177.6 L397.2 179.0 L396.7 180.5 L396.2 182.0 L395.9 183.7 L395.6 185.3 L395.4 187.0 L395.3 188.7 L395.4 190.4 L395.7 192.1 L396.2 193.8 L396.8 195.5 L397.5 197.1 L398.2 198.7 L399.1 200.2 L399.9 201.6 L400.8 202.9 L401.7 204.1 L402.5 205.1 L403.2 205.9 L404.0 206.4 L406.0 205.6 L406.2 204.6 L406.1 203.4 L405.8 202.2 L405.5 200.8 L405.1 199.3 L404.7 197.8 L404.2 196.3 L403.8 194.7 L403.4 193.3 L403.0 191.9 L402.8 190.6 L402.6 189.6 L402.5 188.5 L402.4 187.3 L402.4 185.9 L402.4 184.5 L402.5 183.0 L402.6 181.5 L402.6 180.1 L402.6 178.7 L402.6 177.3 L402.6 176.1 L402.5 175.1 L402.1 174.2 Z"/>
<path fill="#000" d="M444.3 179.3 L443.4 179.4 L442.5 179.9 L441.4 180.5 L440.3 181.1 L439.1 181.9 L437.9 182.8 L436.6 183.7 L435.4 184.7 L434.1 185.7 L432.9 186.6 L431.8 187.6 L430.8 188.6 L429.7 189.5 L428.7 190.6 L427.6 191.7 L426.5 192.8 L425.4 194.0 L424.4 195.2 L423.4 196.3 L422.5 197.4 L421.8 198.5 L421.1 199.5 L420.6 200.4 L420.3 201.3 L421.7 202.7 L422.6 202.6 L423.5 202.1 L424.6 201.5 L425.7 200.9 L426.9 200.1 L428.1 199.2 L429.4 198.3 L430.6 197.3 L431.9 196.3 L433.1 195.4 L434.2 194.4 L435.2 193.4 L436.3 192.5 L437.3 191.4 L438.4 190.3 L439.5 189.2 L440.6 188.0 L441.6 186.8 L442.6 185.7 L443.5 184.6 L444.2 183.5 L444.9 182.5 L445.4 181.6 L445.7 180.7 Z"/>
<path fill="#000" d="M418.2 224.3 L418.0 225.2 L418.0 226.1 L418.1 227.3 L418.3 228.6 L418.5 230.0 L418.8 231.5 L419.2 233.0 L419.7 234.5 L420.3 236.0 L421.0 237.4 L421.8 238.8 L422.8 240.0 L423.9 241.1 L425.1 241.9 L426.4 242.7 L427.8 243.3 L429.1 243.8 L430.5 244.2 L431.7 244.5 L433.0 244.7 L434.1 244.8 L435.1 244.9 L435.9 245.0 L436.6 244.8 L437.4 243.2 L436.9 242.5 L436.2 241.9 L435.3 241.4 L434.4 240.8 L433.4 240.2 L432.3 239.6 L431.2 239.0 L430.2 238.4 L429.3 237.7 L428.5 237.1 L427.8 236.5 L427.2 236.0 L426.7 235.4 L426.2 234.5 L425.6 233.4 L425.0 232.3 L424.3 231.0 L423.7 229.8 L423.0 228.5 L422.4 227.2 L421.8 226.1 L421.2 225.1 L420.6 224.2 L419.8 223.7 Z"/>
<path fill="#000" d="M450.2 233.5 L449.7 233.5 L449.3 233.7 L448.9 233.9 L448.4 234.2 L448.0 234.5 L447.5 234.9 L447.1 235.3 L446.7 235.7 L446.3 236.1 L446.0 236.6 L445.7 237.0 L445.4 237.5 L445.2 237.9 L444.9 238.4 L444.7 238.9 L444.5 239.4 L444.3 240.0 L444.2 240.5 L444.1 241.1 L444.0 241.6 L443.9 242.1 L443.9 242.6 L444.0 243.1 L444.2 243.5 L445.8 244.5 L446.3 244.5 L446.7 244.3 L447.1 244.1 L447.6 243.8 L448.0 243.5 L448.5 243.1 L448.9 242.7 L449.3 242.3 L449.7 241.9 L450.0 241.4 L450.3 241.0 L450.6 240.5 L450.8 240.1 L451.1 239.6 L451.3 239.1 L451.5 238.6 L451.7 238.0 L451.8 237.5 L451.9 236.9 L452.0 236.4 L452.1 235.9 L452.1 235.4 L452.0 234.9 L451.8 234.5 Z"/>
<path fill="#000" d="M455.2 230.8 L455.7 231.1 L456.2 231.2 L456.7 231.3 L457.3 231.3 L458.0 231.3 L458.7 231.3 L459.4 231.2 L460.1 231.2 L460.8 231.0 L461.5 230.9 L462.1 230.8 L462.7 230.6 L463.3 230.4 L464.0 230.2 L464.6 229.9 L465.3 229.7 L465.9 229.4 L466.6 229.0 L467.2 228.7 L467.7 228.3 L468.2 228.0 L468.6 227.6 L469.0 227.3 L469.2 226.8 L468.8 225.2 L468.3 224.9 L467.8 224.8 L467.3 224.7 L466.7 224.7 L466.0 224.7 L465.3 224.7 L464.6 224.8 L463.9 224.8 L463.2 225.0 L462.5 225.1 L461.9 225.2 L461.3 225.4 L460.7 225.6 L460.0 225.8 L459.4 226.1 L458.7 226.3 L458.1 226.6 L457.4 227.0 L456.8 227.3 L456.3 227.7 L455.8 228.0 L455.4 228.4 L455.0 228.7 L454.8 229.2 Z"/>
<path fill="#000" d="M541.3 199.7 L541.5 200.8 L542.1 202.0 L542.8 203.4 L543.8 204.8 L544.9 206.3 L546.0 207.9 L547.2 209.4 L548.5 210.8 L549.7 212.1 L550.8 213.3 L551.8 214.3 L552.6 215.1 L553.3 215.7 L553.8 216.3 L554.3 216.8 L554.7 217.3 L555.0 217.8 L555.3 218.2 L555.6 218.6 L555.8 219.0 L556.1 219.4 L556.3 219.7 L556.6 220.1 L557.1 220.3 L558.9 219.7 L559.1 219.3 L559.2 219.0 L559.3 218.6 L559.3 218.1 L559.4 217.5 L559.3 216.9 L559.2 216.2 L559.0 215.4 L558.8 214.5 L558.4 213.6 L557.9 212.6 L557.4 211.5 L556.6 210.4 L555.7 209.1 L554.6 207.7 L553.4 206.3 L552.0 205.0 L550.6 203.6 L549.1 202.3 L547.7 201.1 L546.3 200.1 L545.0 199.3 L543.8 198.6 L542.7 198.3 Z"/>
<path fill="#000" d="M498.8 204.8 L500.0 205.5 L501.6 206.1 L503.4 206.7 L505.5 207.3 L507.7 207.9 L510.1 208.6 L512.5 209.3 L515.0 209.9 L517.5 210.6 L519.9 211.3 L522.1 211.9 L524.2 212.6 L526.2 213.2 L528.3 214.0 L530.5 214.8 L532.8 215.7 L535.0 216.5 L537.2 217.4 L539.3 218.2 L541.3 219.0 L543.2 219.6 L544.9 220.2 L546.4 220.6 L547.7 220.7 L548.3 219.3 L547.4 218.4 L546.1 217.6 L544.7 216.6 L542.9 215.6 L541.1 214.5 L539.1 213.4 L536.9 212.2 L534.7 211.1 L532.5 210.1 L530.2 209.1 L528.0 208.2 L525.8 207.4 L523.6 206.8 L521.2 206.1 L518.7 205.5 L516.2 205.0 L513.6 204.5 L511.0 204.1 L508.6 203.8 L506.2 203.5 L504.1 203.3 L502.2 203.2 L500.5 203.1 L499.2 203.2 Z"/>
<path fill="#000" d="M475.2 242.9 L476.3 243.0 L477.6 242.8 L479.1 242.6 L480.7 242.4 L482.5 242.0 L484.4 241.7 L486.3 241.4 L488.2 241.1 L490.1 240.9 L491.8 240.7 L493.4 240.7 L494.9 240.8 L496.3 240.9 L497.7 241.2 L499.1 241.5 L500.6 241.9 L502.1 242.4 L503.5 242.9 L504.9 243.4 L506.3 244.0 L507.7 244.6 L509.0 245.3 L510.3 245.9 L511.5 246.5 L512.6 247.2 L513.7 247.9 L514.8 248.7 L515.8 249.5 L516.9 250.4 L517.9 251.3 L518.9 252.2 L519.8 253.1 L520.8 254.0 L521.7 254.9 L522.5 255.7 L523.4 256.5 L524.1 257.2 L524.8 257.9 L525.5 258.6 L526.2 259.3 L526.8 260.0 L527.4 260.6 L527.9 261.3 L528.4 261.9 L528.9 262.4 L529.4 262.9 L529.8 263.3 L530.3 263.5 L531.7 262.5 L531.6 262.0 L531.4 261.5 L531.2 260.9 L530.9 260.2 L530.5 259.5 L530.1 258.7 L529.7 257.9 L529.2 257.1 L528.6 256.2 L528.0 255.3 L527.3 254.4 L526.6 253.5 L525.9 252.6 L525.2 251.7 L524.4 250.7 L523.5 249.6 L522.6 248.6 L521.6 247.5 L520.6 246.4 L519.5 245.3 L518.3 244.3 L517.1 243.3 L515.8 242.3 L514.5 241.5 L513.1 240.7 L511.7 239.9 L510.2 239.2 L508.7 238.5 L507.1 237.9 L505.5 237.2 L503.8 236.7 L502.1 236.2 L500.4 235.8 L498.7 235.5 L496.9 235.3 L495.1 235.2 L493.2 235.3 L491.3 235.5 L489.3 235.9 L487.3 236.4 L485.3 236.9 L483.3 237.5 L481.5 238.2 L479.8 238.8 L478.2 239.5 L476.8 240.0 L475.7 240.6 L474.8 241.1 Z"/>
<path fill="#000" d="M528.2 263.4 L528.2 264.3 L528.4 265.3 L528.7 266.4 L529.1 267.7 L529.5 269.0 L530.0 270.5 L530.6 272.0 L531.3 273.6 L532.0 275.3 L532.7 277.0 L533.6 278.7 L534.5 280.5 L535.5 282.3 L536.7 284.4 L538.1 286.6 L539.5 288.9 L541.1 291.2 L542.7 293.4 L544.3 295.6 L545.9 297.7 L547.4 299.6 L548.8 301.2 L550.1 302.6 L551.2 303.5 L552.8 302.5 L552.4 301.1 L551.8 299.4 L550.8 297.4 L549.8 295.3 L548.6 292.9 L547.3 290.6 L545.9 288.1 L544.5 285.7 L543.2 283.4 L541.8 281.3 L540.6 279.3 L539.5 277.5 L538.6 276.0 L537.6 274.4 L536.7 272.8 L535.8 271.3 L534.9 269.9 L534.1 268.5 L533.3 267.2 L532.5 266.1 L531.8 265.0 L531.1 264.0 L530.5 263.2 L529.8 262.6 Z"/>
<path fill="#000" d="M472.6 254.8 L473.1 255.3 L473.8 255.8 L474.6 256.3 L475.5 256.9 L476.6 257.5 L477.6 258.1 L478.7 258.8 L479.8 259.5 L480.8 260.3 L481.8 261.0 L482.7 261.8 L483.5 262.6 L484.3 263.5 L485.1 264.4 L485.9 265.4 L486.7 266.5 L487.5 267.6 L488.3 268.7 L489.1 269.9 L489.8 271.1 L490.5 272.3 L491.2 273.6 L491.8 274.9 L492.4 276.2 L493.0 277.6 L493.6 279.0 L494.1 280.4 L494.6 281.9 L495.1 283.4 L495.5 285.0 L496.0 286.6 L496.4 288.3 L496.8 290.0 L497.2 291.8 L497.7 293.7 L498.1 295.6 L498.5 297.6 L498.8 299.8 L499.2 302.2 L499.5 304.7 L499.8 307.3 L500.2 309.8 L500.5 312.4 L500.9 315.0 L501.3 317.4 L501.8 319.6 L502.3 321.8 L502.9 323.6 L503.6 325.3 L504.4 326.9 L505.3 328.2 L506.2 329.4 L507.1 330.5 L508.0 331.4 L508.9 332.1 L509.8 332.8 L510.6 333.4 L511.2 333.9 L511.8 334.3 L512.3 334.6 L513.7 333.4 L513.4 332.8 L512.9 332.1 L512.4 331.4 L511.8 330.7 L511.1 330.0 L510.5 329.1 L509.8 328.2 L509.1 327.3 L508.5 326.2 L508.0 325.0 L507.5 323.8 L507.1 322.4 L506.8 320.7 L506.5 318.8 L506.2 316.6 L506.0 314.3 L505.8 311.8 L505.6 309.3 L505.4 306.7 L505.2 304.1 L504.9 301.5 L504.6 299.0 L504.3 296.6 L503.9 294.4 L503.5 292.4 L503.1 290.5 L502.7 288.6 L502.2 286.8 L501.7 285.0 L501.2 283.3 L500.7 281.6 L500.2 280.0 L499.6 278.4 L498.9 276.8 L498.3 275.3 L497.6 273.8 L496.8 272.3 L496.0 270.9 L495.2 269.5 L494.3 268.2 L493.4 266.9 L492.4 265.7 L491.5 264.5 L490.5 263.4 L489.5 262.3 L488.5 261.3 L487.5 260.3 L486.5 259.4 L485.4 258.5 L484.2 257.7 L482.9 256.9 L481.7 256.3 L480.4 255.7 L479.1 255.1 L477.9 254.6 L476.8 254.2 L475.8 253.9 L474.9 253.6 L474.1 253.3 L473.4 253.2 Z"/>
<path fill="#000" d="M508.1 281.0 L507.7 282.1 L507.5 283.5 L507.3 285.0 L507.2 286.8 L507.0 288.7 L506.9 290.7 L506.9 292.8 L506.8 295.0 L506.8 297.1 L506.9 299.2 L506.9 301.2 L507.0 303.1 L507.1 305.0 L507.2 307.1 L507.4 309.1 L507.6 311.3 L507.8 313.4 L508.1 315.5 L508.3 317.5 L508.6 319.4 L508.9 321.1 L509.3 322.7 L509.6 324.0 L510.1 325.0 L511.9 325.0 L512.3 323.9 L512.5 322.5 L512.7 321.0 L512.8 319.2 L513.0 317.3 L513.1 315.3 L513.1 313.2 L513.2 311.0 L513.2 308.9 L513.1 306.8 L513.1 304.8 L513.0 302.9 L512.9 301.0 L512.8 298.9 L512.6 296.9 L512.4 294.7 L512.2 292.6 L511.9 290.5 L511.7 288.5 L511.4 286.6 L511.1 284.9 L510.7 283.3 L510.4 282.0 L509.9 281.0 Z"/>
<path fill="#000" d="M528.2 291.4 L528.2 292.3 L528.4 293.3 L528.7 294.5 L529.1 295.9 L529.6 297.3 L530.1 298.8 L530.6 300.4 L531.2 301.9 L531.7 303.5 L532.3 305.1 L532.8 306.6 L533.3 308.0 L533.8 309.4 L534.2 310.9 L534.7 312.5 L535.2 314.1 L535.7 315.7 L536.2 317.3 L536.8 318.9 L537.3 320.5 L537.9 322.0 L538.5 323.4 L539.1 324.8 L539.7 326.0 L540.3 327.2 L541.0 328.3 L541.7 329.3 L542.5 330.2 L543.2 331.0 L543.9 331.8 L544.5 332.4 L545.2 333.0 L545.8 333.5 L546.3 334.0 L546.8 334.3 L547.3 334.5 L548.7 333.5 L548.6 332.9 L548.4 332.3 L548.1 331.7 L547.7 331.0 L547.3 330.3 L546.9 329.5 L546.4 328.7 L546.0 327.8 L545.5 326.9 L545.1 326.0 L544.7 325.0 L544.3 324.0 L543.9 322.8 L543.6 321.6 L543.2 320.2 L542.8 318.7 L542.3 317.2 L541.9 315.6 L541.4 313.9 L540.9 312.3 L540.4 310.7 L539.9 309.0 L539.3 307.5 L538.7 306.0 L538.1 304.5 L537.4 303.0 L536.6 301.4 L535.8 299.9 L535.0 298.4 L534.2 296.9 L533.4 295.6 L532.6 294.3 L531.8 293.1 L531.1 292.1 L530.5 291.2 L529.8 290.6 Z"/>
<path fill="#000" d="M561.1 236.3 L560.9 237.2 L561.0 238.3 L561.0 239.6 L561.2 241.0 L561.4 242.6 L561.7 244.3 L562.0 246.0 L562.4 247.8 L563.0 249.7 L563.7 251.4 L564.5 253.2 L565.4 254.8 L566.5 256.3 L567.7 257.9 L569.1 259.5 L570.5 261.0 L572.1 262.5 L573.7 264.0 L575.3 265.3 L577.0 266.6 L578.6 267.6 L580.2 268.5 L581.7 269.3 L583.4 269.7 L585.2 269.8 L586.9 269.3 L588.2 268.4 L589.3 267.4 L590.1 266.3 L590.8 265.1 L591.4 264.0 L591.9 262.8 L592.2 261.8 L592.5 260.9 L592.7 260.2 L592.8 259.6 L591.2 258.4 L590.6 258.7 L589.9 259.4 L589.3 260.1 L588.6 260.9 L587.9 261.8 L587.2 262.6 L586.5 263.4 L585.8 263.9 L585.3 264.3 L584.9 264.4 L584.8 264.4 L584.6 264.3 L584.1 264.0 L583.2 263.4 L582.0 262.6 L580.8 261.6 L579.4 260.4 L578.1 259.1 L576.6 257.8 L575.2 256.4 L573.9 255.0 L572.7 253.6 L571.5 252.4 L570.6 251.2 L569.8 250.1 L569.0 248.9 L568.3 247.5 L567.6 246.0 L567.0 244.5 L566.3 243.0 L565.8 241.5 L565.2 240.0 L564.6 238.7 L564.1 237.5 L563.6 236.5 L562.9 235.7 Z"/>
<path fill="#000" d="M591.1 258.2 L590.8 258.9 L590.7 259.9 L590.7 261.0 L590.8 262.1 L590.9 263.3 L591.0 264.6 L591.1 265.8 L591.2 267.0 L591.2 268.1 L591.2 269.0 L591.2 269.7 L591.1 270.2 L591.0 270.6 L590.7 271.1 L590.3 271.7 L589.8 272.4 L589.2 273.1 L588.6 273.9 L587.9 274.7 L587.2 275.4 L586.6 276.2 L586.0 276.9 L585.6 277.6 L585.4 278.3 L586.6 279.7 L587.3 279.7 L588.0 279.5 L588.8 279.2 L589.7 278.8 L590.7 278.3 L591.7 277.7 L592.7 277.0 L593.7 276.3 L594.7 275.4 L595.6 274.4 L596.3 273.2 L596.9 271.8 L597.2 270.4 L597.2 268.9 L597.1 267.5 L596.8 266.1 L596.5 264.8 L596.0 263.4 L595.5 262.2 L595.0 261.0 L594.5 260.0 L594.0 259.1 L593.5 258.3 L592.9 257.8 Z"/>
<path fill="#000" d="M587.2 283.6 L587.3 284.4 L587.7 285.2 L588.2 286.2 L588.7 287.2 L589.3 288.3 L590.0 289.4 L590.6 290.6 L591.3 291.7 L591.8 292.9 L592.4 294.0 L592.8 295.1 L593.1 296.1 L593.4 297.2 L593.7 298.4 L594.0 299.6 L594.3 300.9 L594.5 302.2 L594.7 303.5 L594.9 304.8 L595.0 306.0 L595.1 307.2 L595.1 308.3 L595.1 309.4 L595.0 310.3 L594.8 311.2 L594.5 312.1 L594.1 313.2 L593.5 314.3 L592.9 315.4 L592.2 316.5 L591.6 317.6 L590.9 318.7 L590.3 319.8 L589.8 320.7 L589.3 321.6 L589.2 322.4 L590.8 323.6 L591.5 323.3 L592.2 322.8 L593.1 322.1 L594.0 321.3 L595.0 320.5 L596.0 319.5 L597.0 318.4 L598.0 317.2 L598.9 316.0 L599.8 314.6 L600.5 313.2 L601.0 311.7 L601.3 310.2 L601.5 308.7 L601.6 307.2 L601.6 305.6 L601.5 304.1 L601.3 302.5 L601.0 301.0 L600.7 299.5 L600.3 298.0 L599.9 296.6 L599.4 295.2 L598.9 293.9 L598.2 292.6 L597.5 291.3 L596.6 290.0 L595.7 288.8 L594.7 287.6 L593.8 286.6 L592.8 285.6 L591.9 284.7 L591.0 283.9 L590.2 283.3 L589.5 282.8 L588.8 282.4 Z"/>
<path fill="#000" d="M579.2 308.8 L578.7 309.1 L578.4 309.5 L578.0 310.0 L577.6 310.6 L577.3 311.3 L576.9 312.0 L576.6 312.7 L576.3 313.4 L576.0 314.2 L575.8 314.9 L575.6 315.7 L575.4 316.3 L575.2 317.0 L575.1 317.8 L574.9 318.6 L574.8 319.4 L574.7 320.2 L574.7 321.0 L574.7 321.7 L574.7 322.5 L574.7 323.2 L574.8 323.8 L574.9 324.3 L575.2 324.8 L576.8 325.2 L577.3 324.9 L577.6 324.5 L578.0 324.0 L578.4 323.4 L578.7 322.7 L579.1 322.0 L579.4 321.3 L579.7 320.6 L580.0 319.8 L580.2 319.1 L580.4 318.3 L580.6 317.7 L580.8 317.0 L580.9 316.2 L581.1 315.4 L581.2 314.6 L581.3 313.8 L581.3 313.0 L581.3 312.3 L581.3 311.5 L581.3 310.8 L581.2 310.2 L581.1 309.7 L580.8 309.2 Z"/>
<path fill="#000" d="M575.2 315.7 L574.7 316.1 L574.3 316.5 L573.9 317.1 L573.4 317.7 L573.0 318.5 L572.6 319.2 L572.1 320.0 L571.7 320.9 L571.4 321.7 L571.0 322.6 L570.7 323.4 L570.4 324.1 L570.2 324.9 L569.9 325.8 L569.7 326.6 L569.5 327.5 L569.3 328.4 L569.2 329.4 L569.1 330.2 L569.0 331.1 L568.9 331.8 L568.9 332.6 L569.0 333.2 L569.2 333.7 L570.8 334.3 L571.3 333.9 L571.7 333.5 L572.1 332.9 L572.6 332.3 L573.0 331.5 L573.4 330.8 L573.9 330.0 L574.3 329.1 L574.6 328.3 L575.0 327.4 L575.3 326.6 L575.6 325.9 L575.8 325.1 L576.1 324.2 L576.3 323.4 L576.5 322.5 L576.7 321.6 L576.8 320.6 L576.9 319.8 L577.0 318.9 L577.1 318.2 L577.1 317.4 L577.0 316.8 L576.8 316.3 Z"/>
<path fill="#4d3222" stroke="#000" stroke-width="1.6" d="M347 288 C355 287 365 288.5 371 290.5 L383 294.5 L393 297 L393 306.5 C385 305 372 301.5 363 299.5 L347 298.5 Z"/>
<path fill="none" stroke="#000" stroke-width="2.8" stroke-linecap="round" stroke-linejoin="round" d="M347.0 288.0 C349.0 287.9 355.0 287.2 359.0 287.6 C363.0 288.0 367.0 289.4 371.0 290.5 C375.0 291.6 379.3 293.4 383.0 294.5 C386.7 295.6 391.3 296.6 393.0 297.0"/>
<rect x="394" y="300" width="5.5" height="8" fill="#000"/>
<path fill="none" stroke="#000" stroke-width="4" stroke-linecap="round" stroke-linejoin="round" d="M343.0 301.0 L351.0 310.0"/>
<path fill="#4d3222" stroke="#000" stroke-width="1.8" d="M436.6 303.3 L479.8 304.2 L489.9 314.3 L484.4 318.9 L475.2 314.3 L441.1 315.2 L436.6 311.6 Z"/>
<path fill="none" stroke="#000" stroke-width="3" stroke-linecap="round" stroke-linejoin="round" d="M436.6 303.3 C440.2 303.2 450.8 302.9 458.0 303.0 C465.2 303.1 476.2 304.0 479.8 304.2"/>
<polygon points="478,304 490.5,314.3 485,319.5 478,315" fill="#000"/>
<path fill="none" stroke="#000" stroke-width="2.2" stroke-linecap="round" stroke-linejoin="round" d="M441.0 315.5 L476.0 314.5"/>
<path fill="none" stroke="#000" stroke-width="4" stroke-linecap="round" stroke-linejoin="round" d="M425.0 310.6 L434.5 302.6"/>
<polygon fill="#f4f2f0" points="341,326 358,320 372,319 381,323 394,337 386,336 372,337 361,338 347,328"/>
<path fill="#6a7f3e" stroke="#000" stroke-width="2.2" d="M363 321 C367 318 379 318 381 323 C384 330 381 336 378 337 L366 337 C363 333 362 326 363 321 Z"/>
<rect x="370" y="325" width="5.5" height="4.6" fill="#000"/>
<path fill="none" stroke="#000" stroke-width="4.5" stroke-linecap="round" stroke-linejoin="round" d="M341.0 326.0 C342.5 325.3 347.2 323.0 350.0 322.0 C352.8 321.0 354.3 320.6 358.0 320.0 C361.7 319.4 368.2 318.0 372.0 318.5 C375.8 319.0 378.3 321.1 381.0 323.0 C383.7 324.9 385.8 327.7 388.0 330.0 C390.2 332.3 393.0 335.8 394.0 337.0"/>
<path fill="none" stroke="#000" stroke-width="2.8" stroke-linecap="round" stroke-linejoin="round" d="M347.0 329.0 C348.3 330.0 352.7 333.5 355.0 335.0 C357.3 336.5 358.2 337.6 361.0 338.0 C363.8 338.4 367.8 337.8 372.0 337.5 C376.2 337.2 382.3 336.6 386.0 336.5 C389.7 336.4 392.7 336.9 394.0 337.0"/>
<path fill="none" stroke="#000" stroke-width="3.2" stroke-linecap="round" stroke-linejoin="round" d="M383.0 321.6 L390.0 327.0"/>
<path fill="none" stroke="#000" stroke-width="2.8" stroke-linecap="round" stroke-linejoin="round" d="M374.5 341.0 L384.7 340.0"/>
<polygon fill="#f4f2f0" points="433,345 443,340 453,333 464,333 476,341 488,350 476,354 464,355 453,352 439,347"/>
<path fill="#6a7f3e" stroke="#000" stroke-width="2.4" d="M452 335 C456 332 468 332 472 336 C474 342 472 349 468 352 L458 352 C453 348 451 341 452 335 Z"/>
<rect x="460" y="340.6" width="5.5" height="4.6" fill="#000"/>
<path fill="none" stroke="#000" stroke-width="4.5" stroke-linecap="round" stroke-linejoin="round" d="M433.0 345.0 C434.7 344.2 439.7 341.9 443.0 340.0 C446.3 338.1 449.5 334.7 453.0 333.5 C456.5 332.3 460.2 331.8 464.0 333.0 C467.8 334.2 472.0 337.7 476.0 340.5 C480.0 343.3 486.0 348.4 488.0 350.0"/>
<path fill="none" stroke="#000" stroke-width="3" stroke-linecap="round" stroke-linejoin="round" d="M455.0 351.0 C456.5 351.7 460.4 354.4 464.0 355.0 C467.6 355.6 472.5 355.2 476.5 354.4 C480.5 353.6 486.1 350.7 488.0 350.0"/>
<path fill="none" stroke="#000" stroke-width="3" stroke-linecap="round" stroke-linejoin="round" d="M438.0 336.0 L447.0 333.3"/>
<path fill="none" stroke="#000" stroke-width="2.5" stroke-linecap="round" stroke-linejoin="round" d="M439.0 348.0 L448.0 349.0"/>
<path fill="none" stroke="#000" stroke-width="2.5" stroke-linecap="round" stroke-linejoin="round" d="M440.0 352.0 L450.0 354.4"/>
<path fill="none" stroke="#000" stroke-width="5" stroke-linecap="round" stroke-linejoin="round" d="M404.5 318.5 L406.8 334.5"/>
<path fill="#000" d="M404.5 344 L408.5 344.6 C406 352 402 362 395.5 375.5 C390 386 385 392 381 395 C384 397 390 401 395 404 L418.4 401.4 L418.6 403.6 C410 405 403 406 394 406.5 C389 403 383 399 375 396.5 L374.5 394.5 C381 390 387 382 391 374 C397 362 402 352 404.5 344 Z"/>
<path fill="none" stroke="#000" stroke-width="4" stroke-linecap="round" stroke-linejoin="round" d="M390.2 414.5 L385.2 420.5"/>
<polygon fill="#ac8466" points="374,443 413,452 409.5,459 399,459.5 374,449"/>
<path fill="none" stroke="#000" stroke-width="3.8" stroke-linecap="round" stroke-linejoin="round" d="M370.6 435.6 L392 443.5 L413.6 452.2"/>
<path fill="none" stroke="#000" stroke-width="2.6" stroke-linecap="round" stroke-linejoin="round" d="M413 452.2 L427.3 451.8"/>
<path fill="none" stroke="#000" stroke-width="3.6" stroke-linecap="round" stroke-linejoin="round" d="M364.8 453.2 L373.6 450.3 L399 460 L409.7 459.1"/>
<path fill="none" stroke="#000" stroke-width="4.5" stroke-linecap="round" stroke-linejoin="round" d="M368.7 441.5 L374.5 448.3"/>
<rect x="365.5" y="427.8" width="5" height="4.6" fill="#000" transform="rotate(15 368 430)"/>
<g fill="#7a5237"><ellipse rx="2.1" ry="1.45" cx="363" cy="351.1"/><ellipse rx="2.1" ry="1.45" cx="388.2" cy="351.6"/><ellipse rx="2.1" ry="1.45" cx="395.2" cy="350.1"/><ellipse rx="2.1" ry="1.45" cx="416.4" cy="339"/><ellipse rx="2.1" ry="1.45" cx="417.4" cy="350.6"/><ellipse rx="2.1" ry="1.45" cx="393.7" cy="357.1"/><ellipse rx="2.1" ry="1.45" cx="409.3" cy="358.1"/><ellipse rx="2.1" ry="1.45" cx="380.2" cy="361.7"/><ellipse rx="2.1" ry="1.45" cx="383.2" cy="365.2"/><ellipse rx="2.1" ry="1.45" cx="366.1" cy="362.2"/><ellipse rx="2.1" ry="1.45" cx="413.3" cy="363.2"/><ellipse rx="2.1" ry="1.45" cx="406.3" cy="366.2"/><ellipse rx="2.1" ry="1.45" cx="421.4" cy="366.2"/><ellipse rx="2.1" ry="1.45" cx="412.8" cy="368.7"/><ellipse rx="2.1" ry="1.45" cx="369.1" cy="371.7"/><ellipse rx="2.1" ry="1.45" cx="405.3" cy="373.7"/><ellipse rx="2.1" ry="1.45" cx="414.4" cy="375.7"/><ellipse rx="2.1" ry="1.45" cx="425.4" cy="375.7"/><ellipse rx="2.1" ry="1.45" cx="431.5" cy="374.7"/><ellipse rx="2.1" ry="1.45" cx="400.3" cy="378.8"/><ellipse rx="2.1" ry="1.45" cx="386.2" cy="376.2"/><ellipse rx="2.1" ry="1.45" cx="410.8" cy="383.8"/><ellipse rx="2.1" ry="1.45" cx="393.7" cy="385.3"/><ellipse rx="2.1" ry="1.45" cx="362.5" cy="350.3"/><ellipse rx="2.1" ry="1.45" cx="340.4" cy="362.4"/><ellipse rx="2.1" ry="1.45" cx="368.5" cy="371.4"/><ellipse rx="2.1" ry="1.45" cx="452.4" cy="382.6"/><ellipse rx="2.1" ry="1.45" cx="469.5" cy="387.6"/><ellipse rx="2.1" ry="1.45" cx="438.3" cy="391.6"/><ellipse rx="2.1" ry="1.45" cx="436.3" cy="366.5"/><ellipse rx="2.1" ry="1.45" cx="432.2" cy="372.5"/><ellipse rx="2.1" ry="1.45" cx="350.4" cy="412.7"/><ellipse rx="2.1" ry="1.45" cx="463.8" cy="435.1"/><ellipse rx="2.1" ry="1.45" cx="450.7" cy="450.2"/><ellipse rx="2.1" ry="1.45" cx="464.4" cy="434.9"/></g>
<path fill="none" stroke="#000" stroke-width="4.5" stroke-linecap="round" stroke-linejoin="round" d="M-3.0 166.0 C-1.9 165.9 2.2 164.7 3.4 165.5 C4.6 166.3 4.9 169.1 4.0 171.0 C3.1 172.9 -1.0 175.8 -2.0 176.7"/>
<path fill="none" stroke="#000" stroke-width="4.5" stroke-linecap="round" stroke-linejoin="round" d="M-2.0 186.5 L7.5 183.6"/>
<path fill="none" stroke="#000" stroke-width="4.6" stroke-linecap="round" stroke-linejoin="round" d="M17.5 164 C14 163.5 9.5 164.5 8 167.5 C7 171 11 172.8 16 174 C21 175.2 24.5 177 23.5 180.5 C22.5 183.5 18 184 14.4 182.5"/>
<path fill="none" stroke="#000" stroke-width="4.2" stroke-linecap="round" stroke-linejoin="round" d="M25.0 157.5 L31.4 164.0"/>
<path fill="none" stroke="#000" stroke-width="4.2" stroke-linecap="round" stroke-linejoin="round" d="M32.6 153.5 L38.8 162.2"/>
<path fill="none" stroke="#000" stroke-width="5" stroke-linecap="round" stroke-linejoin="round" d="M81.9 155.0 C81.9 157.5 81.6 165.0 81.6 170.0 C81.6 175.0 81.9 182.5 81.9 185.0"/>
<path fill="none" stroke="#000" stroke-width="4" stroke-linecap="round" stroke-linejoin="round" d="M80.5 154.5 C84 153.5 89 152.8 92 154 C94.5 155.5 93.5 160 91 163.5 C89 166.5 86.5 169 84.7 170.8"/>
<path fill="none" stroke="#000" stroke-width="4" stroke-linecap="round" stroke-linejoin="round" d="M84.7 172 C89 172.5 94 174.5 95 178 C96 182 93 185.5 89 186.8 C86.5 187.5 84 187 82.6 186.6"/>
<path fill="none" stroke="#000" stroke-width="3.3" stroke-linecap="round" stroke-linejoin="round" d="M99.8 177 C103.5 174.5 108.5 170.5 110 167 C110 164 107.5 162.6 105 163.8 C101 166 98.5 171.5 98.5 177.5 C98.5 182.5 101.5 185.8 105.5 185.6 C108 185.5 110.5 184.5 112.2 183.2"/>
<path fill="none" stroke="#000" stroke-width="5" stroke-linecap="round" stroke-linejoin="round" d="M115.5 165.2 C115.8 166.8 116.6 171.7 117.2 175.0 C117.8 178.3 118.7 183.5 119.0 185.2"/>
<path fill="none" stroke="#000" stroke-width="4.4" stroke-linecap="round" stroke-linejoin="round" d="M116.0 166.0 C117.1 165.8 120.6 164.3 122.4 164.5 C124.2 164.7 125.3 163.8 126.6 167.2 C127.9 170.6 129.4 182.2 130.0 185.2"/>
<path fill="none" stroke="#000" stroke-width="4.4" stroke-linecap="round" stroke-linejoin="round" d="M131.4 166.5 C132.7 166.3 137.1 164.8 139.0 165.2 C140.9 165.5 141.6 165.5 143.1 168.6 C144.6 171.7 147.2 181.3 148.0 183.8"/>
<path fill="none" stroke="#000" stroke-width="3.3" stroke-linecap="round" stroke-linejoin="round" d="M151.5 179 C155.5 176.5 160.5 172.5 163 168.5 C164 165.5 162 163.8 159 164.8 C155 166.5 152 172 152 178 C152 182.5 155.5 185 159.5 185 C163.5 185 167.5 184 170 182.4"/>
<path fill="none" stroke="#000" stroke-width="5.2" stroke-linecap="round" stroke-linejoin="round" d="M174.7 155.0 C174.9 157.5 175.5 165.0 176.0 170.0 C176.5 175.0 177.3 182.5 177.6 185.0"/>
<path fill="none" stroke="#000" stroke-width="5.2" stroke-linecap="round" stroke-linejoin="round" d="M188.3 155.0 C188.7 157.5 189.7 165.3 190.5 170.0 C191.3 174.7 192.8 180.8 193.2 183.0"/>
<path fill="none" stroke="#000" stroke-width="2.4" stroke-linecap="round" stroke-linejoin="round" d="M167.8 173.8 L199.1 173.3"/>
<path fill="none" stroke="#000" stroke-width="4.5" stroke-linecap="round" stroke-linejoin="round" d="M223.5 154 C225.5 151.5 228.5 149.8 231.5 149.8 C235 149.8 236.8 151.5 236 154.5 C235 158 231.5 161.5 230.5 165 C230 168 231 170.8 236.2 171.2"/>
<path fill="none" stroke="#000" stroke-width="4" stroke-linecap="round" stroke-linejoin="round" d="M226.4 184.1 L238.2 178.2"/>
<path fill="none" stroke="#000" stroke-width="4.2" stroke-linecap="round" stroke-linejoin="round" d="M230.3 179.2 L239.1 189.0"/>
</svg>
<div id="side">
 <div class="track" style="top:5px;height:218px"></div>
 <div class="tick" style="top:99px"></div>
 <div class="tick" style="top:156px"></div>
 <div class="handle" style="top:167px"><div style="position:absolute;left:9px;top:9px;width:26px;height:5px;border-radius:3px;background:#1473f3"></div></div>
 <div style="position:absolute;left:15px;top:263px;width:20.5px;height:20.5px;border:2.3px solid #a6a6a6;border-radius:5.5px;"></div>
 <div class="track" style="top:331px;height:217px"></div>
 <div class="handle" style="top:330px"></div>
</div>
</body></html>
